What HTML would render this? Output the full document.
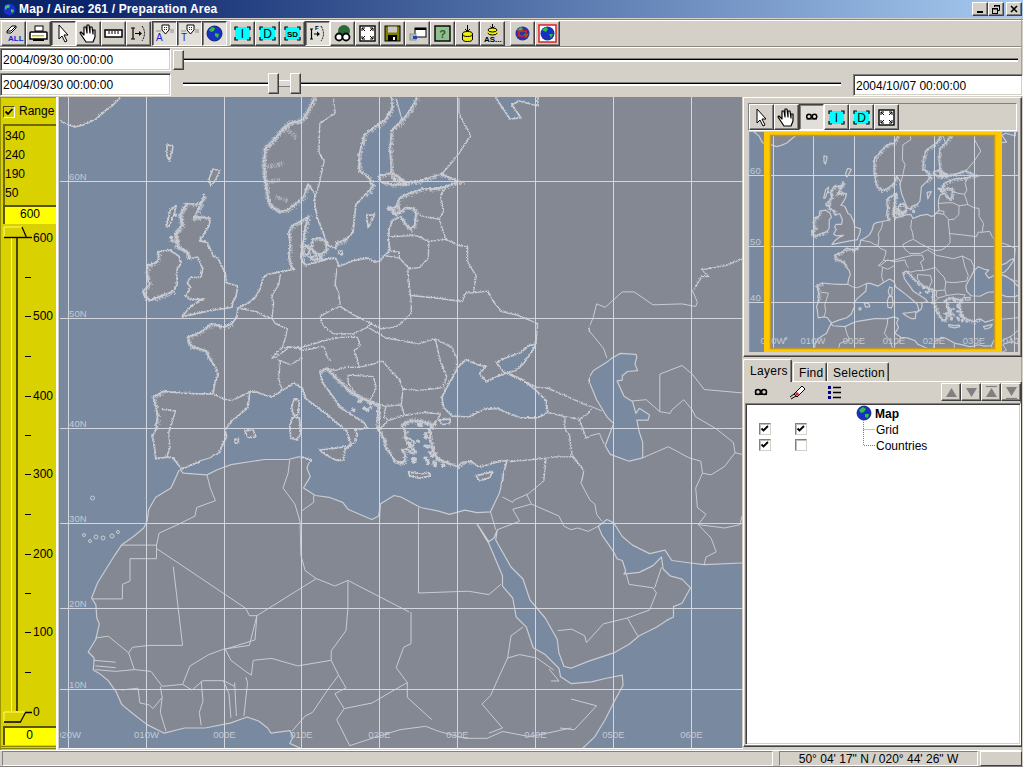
<!DOCTYPE html>
<html><head><meta charset="utf-8">
<style>
*{box-sizing:border-box;margin:0;padding:0}
html,body{width:1023px;height:767px;overflow:hidden;background:#d4d0c8;font-family:"Liberation Sans",sans-serif;font-size:12px;color:#000;position:relative}
.a{position:absolute;display:block}
.t{white-space:pre;line-height:14px}
.wb{position:absolute;top:2px;width:16px;height:14px;background:#d4d0c8;border-top:1px solid #fff;border-left:1px solid #fff;border-right:1px solid #404040;border-bottom:1px solid #404040;box-shadow:inset -1px -1px 0 #808080}
.btn{position:absolute;top:21px;width:25px;height:25px;background:#d4d0c8;border-top:1px solid #fff;border-left:1px solid #fff;border-right:1px solid #404040;border-bottom:1px solid #404040;box-shadow:inset -1px -1px 0 #808080}
.btn.p{border-top:1px solid #404040;border-left:1px solid #404040;border-right:1px solid #fff;border-bottom:1px solid #fff;box-shadow:inset 1px 1px 0 #808080;background:#e2dfd9}
.btn svg,.sb svg{position:absolute;left:0;top:0}
.sb{position:absolute;width:25px;height:26px;background:#d4d0c8;border-top:1px solid #fff;border-left:1px solid #fff;border-right:1px solid #404040;border-bottom:1px solid #404040;box-shadow:inset -1px -1px 0 #808080}
.sb.p{border-top:1px solid #404040;border-left:1px solid #404040;border-right:1px solid #fff;border-bottom:1px solid #fff;box-shadow:inset 1px 1px 0 #808080;background:#e2dfd9}
.tf{position:absolute;background:#fff;border-top:1px solid #808080;border-left:1px solid #808080;border-right:1px solid #fff;border-bottom:1px solid #fff;box-shadow:inset 1px 1px 0 #404040,inset -1px -1px 0 #d4d0c8}
.tf span{position:absolute;left:2px;white-space:pre;line-height:14px}
.thumb{position:absolute;background:#d4d0c8;border-top:1px solid #fff;border-left:1px solid #fff;border-right:1px solid #404040;border-bottom:1px solid #404040;box-shadow:inset -1px -1px 0 #808080}
.trk{position:absolute;height:4px;background:#fff;border-top:1px solid #808080;box-shadow:inset 0 1px 0 #000}
.ab{position:absolute;top:383px;width:20px;height:18px;background:#d4d0c8;border-top:1px solid #fff;border-left:1px solid #fff;border-right:1px solid #404040;border-bottom:1px solid #404040;box-shadow:inset -1px -1px 0 #808080}
.ab svg{position:absolute;left:0;top:0}
.yl{position:absolute;left:25px;white-space:pre;line-height:14px;font-size:12px}
</style></head><body>
<!-- title bar -->
<div class="a" style="left:0;top:0;width:1023px;height:18px;background:linear-gradient(to right,#0a246a 0%,#0a246a 8%,#a6caf0 100%)"></div>
<svg class="a" style="left:2px;top:1px" width="15" height="16" viewBox="0 0 15 16">
<circle cx="7.5" cy="8.5" r="6" fill="#1a2ec8"/><path d="M3,5 L6,3.5 L8,4.5 L7,7 L5,7 L4,9 L3,8Z M9,8 L12,9 L11,12 L9,11Z" fill="#2fd04a"/>
</svg>
<div class="a t" style="left:19px;top:2px;color:#fff;font-weight:bold;font-size:12px;letter-spacing:0.15px">Map / Airac 261 / Preparation Area</div>
<div class="wb" style="left:972px"><div class="a" style="left:4px;top:8px;width:6px;height:2px;background:#000"></div></div>
<div class="wb" style="left:988px"><svg class="a" style="left:2px;top:1px" width="10" height="10"><path d="M3.5,1.5h5v5h-1.5 M3.5,1.5v1.5" fill="none" stroke="#000" stroke-width="1"/><rect x="3" y="1" width="6" height="1.5" fill="#000"/><rect x="1.5" y="4.5" width="5" height="5" fill="none" stroke="#000"/><rect x="1" y="4" width="6" height="1.5" fill="#000"/></svg></div>
<div class="wb" style="left:1006px"><svg class="a" style="left:2px;top:1px" width="10" height="10"><path d="M2,2 L8,8 M8,2 L2,8" stroke="#000" stroke-width="1.6"/></svg></div>
<div class="a" style="left:0;top:18px;width:1023px;height:1px;background:#d4d0c8"></div>
<div class="a" style="left:0;top:19px;width:1023px;height:1px;background:#8a8680"></div>
<div class="a" style="left:0;top:20px;width:1023px;height:1px;background:#fff"></div>
<div class="a" style="left:1021px;top:18px;width:1px;height:749px;background:#a8a49c"></div>
<div class="btn" style="left:1px"><svg width="23" height="23" viewBox="0 0 23 23"><path d="M5,9 L10,4 L14,4 L14,6 L9,11 L5,11Z" fill="#fff" stroke="#000" stroke-width="1"/><path d="M5,9 L9,9 L14,4" fill="none" stroke="#000"/><text x="6" y="19" font-family="Liberation Sans" font-size="8" font-weight="bold" fill="#2020d0">ALL</text></svg></div>
<div class="btn" style="left:26px"><svg width="23" height="23" viewBox="0 0 23 23"><rect x="8" y="4" width="8" height="5" fill="#fff" stroke="#000"/><path d="M4,10 h15 a1,1 0 0 1 1,1 v6 h-17 v-6 a1,1 0 0 1 1,-1z" fill="#fff" stroke="#000" stroke-width="1.5"/><rect x="5" y="13" width="12" height="1.5" fill="#c0c000"/><rect x="6" y="17" width="11" height="2" fill="#000"/></svg></div>
<div class="btn p" style="left:51px"><svg width="23" height="23" viewBox="0 0 23 23"><path d="M7,3 L7,17 L10,14 L13,20 L15,19 L12,13 L16,13Z" fill="#fff" stroke="#000" stroke-width="1"/></svg></div>
<div class="btn" style="left:76px"><svg width="23" height="23" viewBox="0 0 23 23"><path d="M6,12 L4,10 L3,11 L7,17 L9,20 L16,20 L18,15 L18,8 L16,8 L16,12 L15,5 L13,5 L13,11 L12,3 L10,3 L10,11 L9,5 L7,5 L7,13Z" fill="#fff" stroke="#000" stroke-width="1.2" stroke-linejoin="round"/></svg></div>
<div class="btn" style="left:101px"><svg width="23" height="23" viewBox="0 0 23 23"><rect x="3" y="8" width="17" height="7" fill="#fff" stroke="#000" stroke-width="1.5"/><path d="M7,9v3 M10,9v3 M13,9v3 M16,9v3" stroke="#000"/></svg></div>
<div class="btn" style="left:126px"><svg width="23" height="23" viewBox="0 0 23 23"><path d="M4,6 h4 M6,6 v11 M4,17 h4 M8,11.5 h5" stroke="#000" stroke-width="1.2" fill="none"/><path d="M12,9 L15,11.5 L12,14Z" fill="#000"/><path d="M15,4 Q20,11 15,19" fill="none" stroke="#000" stroke-dasharray="2,1"/></svg></div>
<div class="btn p" style="left:152px"><svg width="23" height="23" viewBox="0 0 23 23"><path d="M9,3 h7 v5 l-3.5,4 l-3.5,-4z" fill="#fff" stroke="#000"/><circle cx="11.5" cy="5.5" r=".6"/><circle cx="13.5" cy="5.5" r=".6"/><circle cx="11.5" cy="7.5" r=".6"/><circle cx="13.5" cy="7.5" r=".6"/><path d="M3,9 h5 M17,8 h4 M17,10 h4" stroke="#909090" stroke-width="1.2"/><text x="3" y="19" font-family="Liberation Sans" font-size="10" fill="#2020d0">A</text></svg></div>
<div class="btn p" style="left:177px"><svg width="23" height="23" viewBox="0 0 23 23"><path d="M9,3 h7 v5 l-3.5,4 l-3.5,-4z" fill="#fff" stroke="#000"/><circle cx="11.5" cy="5.5" r=".6"/><circle cx="13.5" cy="5.5" r=".6"/><circle cx="11.5" cy="7.5" r=".6"/><circle cx="13.5" cy="7.5" r=".6"/><path d="M3,9 h5 M17,8 h4 M17,10 h4" stroke="#909090" stroke-width="1.2"/><text x="3" y="19" font-family="Liberation Sans" font-size="10" fill="#2020d0">T</text></svg></div>
<div class="btn p" style="left:202px"><svg width="23" height="23" viewBox="0 0 23 23"><circle cx="11.5" cy="11.5" r="7.5" fill="#1830c0" stroke="#102080"/><path d="M6,8 L9,5 L12,6 L11,9 L8,10Z M12,11 L16,12 L15,16 L12,14Z" fill="#30c040"/></svg></div>
<div class="btn" style="left:230px"><svg width="23" height="23" viewBox="0 0 23 23"><rect x="4" y="5" width="15" height="13" fill="#00ffff"/><path d="M4,8 V5 H7 M16,5 H19 V8 M19,15 V18 H16 M7,18 H4 V15" fill="none" stroke="#000" stroke-width="1.2"/><text x="11.5" y="16" text-anchor="middle" font-family="Liberation Sans" font-size="12" font-weight="normal" fill="#000">I</text></svg></div>
<div class="btn" style="left:255px"><svg width="23" height="23" viewBox="0 0 23 23"><rect x="4" y="5" width="15" height="13" fill="#00ffff"/><path d="M4,8 V5 H7 M16,5 H19 V8 M19,15 V18 H16 M7,18 H4 V15" fill="none" stroke="#000" stroke-width="1.2"/><text x="11.5" y="16" text-anchor="middle" font-family="Liberation Sans" font-size="12" font-weight="normal" fill="#000">D</text></svg></div>
<div class="btn" style="left:280px"><svg width="23" height="23" viewBox="0 0 23 23"><rect x="4" y="5" width="15" height="13" fill="#00ffff"/><path d="M4,8 V5 H7 M16,5 H19 V8 M19,15 V18 H16 M7,18 H4 V15" fill="none" stroke="#000" stroke-width="1.2"/><text x="11.5" y="14.5" text-anchor="middle" font-family="Liberation Sans" font-size="8" font-weight="bold" fill="#000">SD</text></svg></div>
<div class="btn p" style="left:305px"><svg width="23" height="23" viewBox="0 0 23 23"><path d="M4,7 h3 M5.5,7 v10 M4,17 h3 M8,12 h4" stroke="#000" stroke-width="1.2" fill="none"/><path d="M11,9.5 L14,12 L11,14.5Z" fill="#000"/><text x="9" y="8" font-family="Liberation Sans" font-size="6" font-weight="bold">F</text><path d="M15,4 Q20,12 15,19" fill="none" stroke="#000" stroke-dasharray="2,1"/></svg></div>
<div class="btn" style="left:330px"><svg width="23" height="23" viewBox="0 0 23 23"><circle cx="13" cy="9" r="6" fill="#2a6a3a"/><circle cx="8" cy="15" r="3.5" fill="#fff" stroke="#000" stroke-width="1.8"/><circle cx="15" cy="15" r="3.5" fill="#fff" stroke="#000" stroke-width="1.8"/></svg></div>
<div class="btn" style="left:355px"><svg width="23" height="23" viewBox="0 0 23 23"><rect x="4" y="4" width="15" height="15" fill="#fff" stroke="#000" stroke-width="1.4"/><path d="M6,6 L9,9 M6,6 h3 M6,6 v3 M17,6 L14,9 M17,6 h-3 M17,6 v3 M6,17 L9,14 M6,17 h3 M6,17 v-3 M17,17 L14,14 M17,17 h-3 M17,17 v-3" stroke="#000" fill="none"/></svg></div>
<div class="btn" style="left:380px"><svg width="23" height="23" viewBox="0 0 23 23"><rect x="4" y="4" width="15" height="15" fill="#808000" stroke="#000"/><rect x="7" y="4.5" width="9" height="6" fill="#c8c8c8"/><rect x="7" y="13" width="9" height="6" fill="#000"/><rect x="12" y="15" width="2" height="3" fill="#fff"/></svg></div>
<div class="btn" style="left:405px"><svg width="23" height="23" viewBox="0 0 23 23"><rect x="9" y="6" width="11" height="9" fill="#fff" stroke="#000"/><rect x="9" y="6" width="11" height="2" fill="#000"/><rect x="4" y="12" width="6" height="6" fill="#b0c0b0" stroke="#909090"/><rect x="7" y="14" width="4" height="3" fill="#2040c0"/></svg></div>
<div class="btn" style="left:430px"><svg width="23" height="23" viewBox="0 0 23 23"><rect x="4" y="4" width="15" height="15" fill="#90c090" stroke="#000" stroke-width="1.4"/><text x="11.5" y="16" text-anchor="middle" font-family="Liberation Sans" font-size="11" font-weight="bold" fill="#2a5a2a">?</text></svg></div>
<div class="btn" style="left:455px"><svg width="23" height="23" viewBox="0 0 23 23"><path d="M11.5,3 v6 M9,7 l2.5,2.5 l2.5,-2.5" stroke="#000" fill="none"/><ellipse cx="11.5" cy="17" rx="5" ry="2.5" fill="#f0f000" stroke="#000"/><rect x="6.5" y="12" width="10" height="5" fill="#f0f000"/><path d="M6.5,12 v5 M16.5,12 v5" stroke="#000"/><ellipse cx="11.5" cy="12" rx="5" ry="2.5" fill="#f0f000" stroke="#000"/></svg></div>
<div class="btn" style="left:480px"><svg width="23" height="23" viewBox="0 0 23 23"><path d="M11.5,2 v4 M9.5,4.5 l2,2 l2,-2" stroke="#000" fill="none"/><ellipse cx="11.5" cy="11" rx="4.5" ry="2" fill="#f0f000" stroke="#000"/><rect x="7" y="8" width="9" height="3" fill="#f0f000"/><ellipse cx="11.5" cy="8" rx="4.5" ry="2" fill="#f0f000" stroke="#000"/><text x="3" y="20" font-family="Liberation Sans" font-size="8" font-weight="bold">AS...</text></svg></div>
<div class="btn" style="left:510px"><svg width="23" height="23" viewBox="0 0 23 23"><circle cx="11.5" cy="11.5" r="7" fill="#3030a0"/><path d="M6,8 L10,5 L12,7 L10,10Z M13,12 L17,12 L15,16Z" fill="#30c040"/><rect x="8" y="9" width="7" height="5" fill="none" stroke="#e02020" stroke-width="1.5"/></svg></div>
<div class="btn" style="left:535px"><svg width="23" height="23" viewBox="0 0 23 23"><rect x="3" y="3" width="17" height="17" fill="#fff" stroke="#e02020" stroke-width="1.5"/><circle cx="11.5" cy="11.5" r="7" fill="#1830c0"/><path d="M6,8 L10,5 L12,7 L10,10Z M13,12 L17,12 L15,16Z" fill="#30c040"/></svg></div>
<div class="a" style="left:0;top:46px;width:1021px;height:1px;background:#8a8680"></div>
<div class="a" style="left:0;top:47px;width:1021px;height:1px;background:#fff"></div>
<!-- date row 1 -->
<div class="tf" style="left:0;top:48px;width:171px;height:23px"><span style="top:4px">2004/09/30 00:00:00</span></div>
<div class="trk" style="left:178px;top:58px;width:840px"></div>
<div class="thumb" style="left:173px;top:50px;width:11px;height:20px"></div>
<!-- date row 2 -->
<div class="tf" style="left:0;top:73px;width:171px;height:23px"><span style="top:4px">2004/09/30 00:00:00</span></div>
<div class="trk" style="left:183px;top:82px;width:658px"></div>
<div class="a" style="left:278px;top:80px;width:12px;height:7px;background:#dcd9d2;border-top:1px solid #fff;border-bottom:1px solid #808080"></div>
<div class="thumb" style="left:268px;top:73px;width:11px;height:21px"></div>
<div class="thumb" style="left:290px;top:73px;width:11px;height:21px"></div>
<div class="tf" style="left:853px;top:74px;width:170px;height:22px"><span style="top:4px">2004/10/07 00:00:00</span></div>
<div class="a" style="left:0;top:97px;width:56px;height:654px;background:#d9d100"></div>
<div class="a" style="left:0;top:97px;width:1px;height:654px;background:#9a9400"></div>
<div class="a" style="left:0;top:97px;width:56px;height:1px;background:#9a9400"></div>
<div class="a" style="left:3px;top:106px;width:12px;height:12px;border:1px solid #5a5600;border-right-color:#fff;border-bottom-color:#fff;background:#d9d100"><svg class="a" style="left:0;top:0" width="10" height="10"><path d="M1.5,4.5 L4,7 L8.5,2" fill="none" stroke="#000" stroke-width="1.8"/></svg></div>
<div class="a t" style="left:19px;top:104px">Range</div>
<div class="a" style="left:3px;top:124px;width:54px;height:81px;border-top:2px solid #6e6a00;border-left:2px solid #6e6a00;background:#d9d100"></div>
<div class="a t" style="left:5px;top:129px">340</div>
<div class="a t" style="left:5px;top:148px">240</div>
<div class="a t" style="left:5px;top:167px">190</div>
<div class="a t" style="left:5px;top:186px">50</div>
<div class="a" style="left:3px;top:205px;width:54px;height:19px;background:#ffff00;border-top:2px solid #5a5600;border-left:2px solid #5a5600"></div>
<div class="a t" style="left:3px;top:207px;width:54px;text-align:center">600</div>
<div class="a" style="left:11px;top:238px;width:1px;height:473px;background:#ffff60"></div>
<div class="a" style="left:16px;top:238px;width:2px;height:473px;background:#4a4600"></div>
<div class="a" style="left:12px;top:238px;width:4px;height:473px;background:#d9d100"></div>
<svg class="a" style="left:3px;top:226px" width="30" height="14"><path d="M1,1 H19 L23,11 H1Z" fill="#d9d100"/><path d="M1,11 V1 H19" fill="none" stroke="#ffff70" stroke-width="1"/><path d="M19,1 L23.5,11.5" stroke="#000" stroke-width="1.2"/><path d="M1,11.5 H29" stroke="#000" stroke-width="1.4"/></svg>
<svg class="a" style="left:3px;top:710px" width="30" height="14"><path d="M1,2 H23 L18,12 H1Z" fill="#d9d100"/><path d="M1,12 V2 H22" fill="none" stroke="#ffff70" stroke-width="1"/><path d="M17.5,12 L22.5,2.5" stroke="#000" stroke-width="1.2"/><path d="M1,12 H18 M22,2.5 H29" stroke="#000" stroke-width="1.4"/></svg>
<div class="a t" style="left:33px;top:231px">600</div>
<div class="a" style="left:25px;top:277px;width:6px;height:1px;background:#000"></div>
<div class="a" style="left:25px;top:316px;width:6px;height:1px;background:#000"></div>
<div class="a t" style="left:33px;top:309px">500</div>
<div class="a" style="left:25px;top:356px;width:6px;height:1px;background:#000"></div>
<div class="a" style="left:25px;top:396px;width:6px;height:1px;background:#000"></div>
<div class="a t" style="left:33px;top:389px">400</div>
<div class="a" style="left:25px;top:435px;width:6px;height:1px;background:#000"></div>
<div class="a" style="left:25px;top:474px;width:6px;height:1px;background:#000"></div>
<div class="a t" style="left:33px;top:467px">300</div>
<div class="a" style="left:25px;top:514px;width:6px;height:1px;background:#000"></div>
<div class="a" style="left:25px;top:554px;width:6px;height:1px;background:#000"></div>
<div class="a t" style="left:33px;top:547px">200</div>
<div class="a" style="left:25px;top:593px;width:6px;height:1px;background:#000"></div>
<div class="a" style="left:25px;top:632px;width:6px;height:1px;background:#000"></div>
<div class="a t" style="left:33px;top:625px">100</div>
<div class="a" style="left:25px;top:672px;width:6px;height:1px;background:#000"></div>
<div class="a t" style="left:33px;top:705px">0</div>
<div class="a" style="left:3px;top:726px;width:53px;height:19px;background:#ffff00;border-top:2px solid #5a5600;border-left:2px solid #5a5600"></div>
<div class="a t" style="left:3px;top:728px;width:53px;text-align:center">0</div>
<div class="a" style="left:1px;top:746px;width:55px;height:1px;background:#8a8400"></div>
<div class="a" style="left:1px;top:748px;width:55px;height:1px;background:#8a8400"></div>
<!-- map frame -->
<div class="a" style="left:56px;top:97px;width:2px;height:653px;background:#fff"></div>
<div class="a" style="left:59px;top:97px;width:1px;height:651px;background:#808080"></div>
<svg class="a" style="left:60px;top:97px" width="682" height="651" viewBox="60 97 682 651">
<defs><filter id="jag" x="-5%" y="-5%" width="110%" height="110%"><feTurbulence type="turbulence" baseFrequency="0.25" numOctaves="1" seed="5"/><feDisplacementMap in="SourceGraphic" scale="3" xChannelSelector="R" yChannelSelector="G"/></filter><g id="geo">
<rect x="0" y="0" width="1100" height="900" fill="#838893"/>
<polygon points="20.0,60.0 313.7,60.0 313.7,97.0 308.6,107.2 301.7,119.2 288.0,122.6 279.5,131.2 271.0,141.4 264.2,147.4 263.3,158.5 263.3,174.0 265.9,189.3 267.6,201.2 270.0,205.0 278.2,210.5 286.4,209.2 297.4,201.0 302.8,195.5 307.0,183.0 313.8,192.7 313.8,203.7 316.5,217.4 322.0,231.1 324.7,239.3 327.5,244.7 334.3,247.5 335.7,242.0 346.6,237.9 352.1,231.1 353.5,217.4 354.9,203.7 364.4,194.1 368.5,190.0 371.9,184.2 366.8,175.6 358.2,168.8 358.2,153.4 363.3,134.6 373.6,126.0 383.8,119.2 391.4,107.2 390.6,97.0 390.6,60.0 416.2,60.0 416.2,97.0 410.3,107.2 401.7,119.2 390.6,129.5 389.0,148.3 390.6,170.5 392.4,179.0 401.0,182.0 417.0,180.7 440.1,173.0 446.0,175.6 458.0,181.0 447.8,184.2 445.0,185.6 433.6,187.9 421.9,187.9 407.8,192.6 398.4,197.3 394.9,205.5 396.1,212.5 400.8,210.2 404.3,206.7 413.7,207.8 414.9,212.5 413.7,224.2 409.0,227.8 404.3,223.1 399.6,216.0 391.4,219.5 387.9,230.1 387.9,240.6 389.1,250.0 383.2,254.7 379.5,259.8 374.0,261.2 365.8,257.1 352.1,259.8 338.4,265.3 334.3,257.1 324.7,258.4 316.5,261.2 305.6,263.9 302.0,262.0 300.0,255.0 301.5,245.0 303.0,236.0 304.0,228.0 307.0,216.0 300.1,220.1 290.5,225.6 287.8,231.1 289.2,244.7 287.8,255.7 290.5,266.6 293.2,268.0 286.4,269.7 277.8,271.4 267.6,273.1 262.5,276.5 259.0,288.5 253.9,297.0 247.1,302.2 236.8,307.3 236.0,315.8 231.0,322.7 222.3,326.1 210.3,322.7 200.1,331.2 186.4,336.4 189.8,344.9 205.2,350.0 208.6,358.0 215.4,367.3 217.2,374.1 213.8,382.6 212.1,392.9 196.7,392.9 179.6,392.0 162.5,390.3 152.3,396.3 154.8,404.8 156.5,415.1 154.8,428.8 151.4,435.6 153.1,442.4 154.8,457.8 165.9,456.1 172.7,457.8 177.9,464.6 181.3,468.0 193.2,462.9 210.3,457.8 218.9,451.0 222.3,442.4 225.7,435.6 224.0,428.8 231.0,420.2 247.1,406.5 248.8,391.2 255.6,391.2 271.0,396.3 281.3,389.5 293.2,382.6 301.7,387.7 305.2,398.0 312.0,403.1 325.7,413.4 335.9,421.9 346.2,430.5 349.6,442.4 346.2,447.5 354.7,440.7 356.4,433.9 354.7,428.8 366.7,427.0 363.2,421.9 353.0,415.1 339.3,406.5 332.5,396.3 322.3,382.6 318.8,370.7 325.7,367.3 335.9,377.5 349.6,391.2 365.0,399.0 377.0,404.0 376.3,427.1 380.4,433.4 384.6,441.7 383.6,445.9 387.7,450.0 394.0,460.5 399.2,462.6 403.4,460.5 404.4,454.2 401.3,449.0 405.5,448.0 410.7,452.1 414.8,451.1 407.5,443.8 403.4,436.5 404.4,430.2 401.3,424.0 409.6,419.8 415.9,419.8 422.1,420.9 431.5,424.0 434.7,421.9 428.4,428.2 428.4,435.5 430.5,443.8 432.6,452.1 437.8,458.4 448.2,462.6 456.4,465.7 461.8,461.5 470.0,460.5 478.6,466.3 495.7,461.2 505.9,459.5 502.5,473.2 500.8,488.0 499.1,493.8 490.5,511.8 476.9,512.6 464.9,510.1 449.5,514.3 437.6,510.9 420.5,507.5 401.0,497.0 394.0,495.5 380.3,504.1 378.7,516.0 371.8,519.5 347.9,509.2 342.8,502.4 329.1,497.3 315.4,495.5 303.5,488.0 310.3,476.6 306.9,468.0 310.3,459.5 301.7,456.1 288.1,459.5 264.2,459.5 231.0,464.6 217.2,469.7 206.9,474.9 183.0,473.2 179.6,468.9 171.0,488.0 155.7,497.3 148.8,509.2 147.1,521.2 143.7,528.0 133.5,536.5 121.5,545.1 114.7,555.3 106.1,569.0 97.6,582.7 91.6,598.0 95.9,604.9 96.8,618.0 99.3,623.8 95.9,639.2 88.2,652.0 94.2,658.0 93.3,670.0 99.3,673.4 107.8,680.2 116.4,692.2 121.5,704.1 131.7,712.7 147.1,724.6 164.2,733.2 184.7,728.0 205.2,728.0 231.0,722.9 247.1,717.0 259.0,721.2 267.6,728.0 271.0,733.2 289.8,730.6 293.2,736.6 289.8,743.4 300.0,748.0 300.0,790.0 20.0,790.0" fill="#7889a0" stroke="#c9ccd2" stroke-width="1.7" vector-effect="non-scaling-stroke" stroke-linejoin="round"/>
<polygon points="760.0,790.0 760.0,563.0 742.0,563.0 704.2,564.7 690.6,563.0 671.8,560.5 665.0,550.2 649.6,553.6 632.5,545.1 622.3,536.5 613.7,522.9 606.9,519.5 598.3,526.3 601.8,534.8 613.7,551.9 617.1,558.7 622.3,560.5 625.7,570.7 624.0,574.1 639.3,572.4 653.0,565.6 661.5,557.0 663.2,569.0 670.1,575.8 682.0,579.2 690.6,587.8 682.0,603.2 673.5,606.6 673.5,617.0 666.7,620.4 656.4,627.2 639.3,635.8 629.1,644.3 613.7,652.9 588.1,661.4 571.0,668.2 564.0,666.5 558.9,652.9 557.2,639.2 545.2,618.0 530.0,600.0 523.0,579.0 511.0,567.0 495.7,540.0 497.4,529.7 494.0,538.0 488.8,541.7 476.9,523.7 485.4,538.2 488.8,543.4 502.5,575.8 502.5,586.1 512.7,598.0 516.2,617.0 526.4,627.2 533.2,647.8 545.2,654.6 558.9,668.2 560.6,676.8 571.0,683.6 591.5,681.9 605.2,678.5 622.3,675.1 623.1,685.3 613.7,702.4 605.2,719.5 594.9,736.6 583.0,748.0 578.0,790.0" fill="#7889a0" stroke="#c9ccd2" stroke-width="1.7" vector-effect="non-scaling-stroke" stroke-linejoin="round"/>
<polygon points="612.0,358.0 606.9,362.1 593.2,370.7 588.1,379.2 593.2,391.2 596.6,399.7 606.9,416.8 613.7,423.6 610.3,432.2 605.2,445.8 610.3,454.4 629.1,461.2 642.7,457.8 642.7,442.4 639.3,432.2 636.8,420.2 647.9,420.2 649.6,415.1 639.3,408.3 635.9,413.4 632.5,401.4 624.0,396.3 617.1,380.9 622.3,380.1 622.3,375.8 627.4,371.5 637.6,370.7 635.0,363.8 636.8,357.0 635.9,354.3 620.5,353.4" fill="#7889a0" stroke="#c9ccd2" stroke-width="1.7" vector-effect="non-scaling-stroke" stroke-linejoin="round"/>
<polygon points="456.4,367.3 464.9,358.7 476.9,363.8 485.4,365.5 478.6,372.4 485.4,380.9 495.7,375.8 505.9,372.4 519.6,377.5 533.2,387.7 545.2,399.7 546.9,411.7 536.7,416.8 519.6,416.8 505.9,411.7 497.4,407.4 483.7,408.3 468.3,416.0 451.2,415.1 442.7,406.5 441.0,396.3 446.1,386.0 451.2,377.5" fill="#7889a0" stroke="#c9ccd2" stroke-width="1.7" vector-effect="non-scaling-stroke" stroke-linejoin="round"/>
<polygon points="502.5,358.0 519.6,351.7 528.1,344.9 535.0,343.2 531.6,350.0 523.0,362.0 516.0,369.0 505.9,372.4 502.5,370.7 495.7,362.0" fill="#7889a0" stroke="#c9ccd2" stroke-width="1.7" vector-effect="non-scaling-stroke" stroke-linejoin="round"/>
<polygon points="438.8,418.8 449.2,418.2 449.2,422.9 440.9,423.5" fill="#7889a0" stroke="#c9ccd2" stroke-width="1.7" vector-effect="non-scaling-stroke" stroke-linejoin="round"/>
<polygon points="495.0,80.0 495.0,97.0 509.0,118.0 520.0,117.0 511.0,104.0 518.0,100.0 537.0,105.0 537.0,80.0" fill="#7889a0" stroke="#c9ccd2" stroke-width="1.7" vector-effect="non-scaling-stroke" stroke-linejoin="round"/>
<polygon points="20.0,60.0 119.0,60.0 119.0,97.0 111.0,105.0 103.0,111.0 94.0,119.0 82.0,124.0 74.0,126.0 65.0,123.0 58.0,119.0 47.0,118.5 44.0,113.0 40.0,105.0 30.0,97.0 20.0,90.0" fill="#838893" stroke="#c9ccd2" stroke-width="1.7" vector-effect="non-scaling-stroke" stroke-linejoin="round"/>
<polygon points="166.0,144.0 172.0,145.0 171.0,152.0 169.0,160.0 166.0,155.0" fill="#838893" stroke="#c9ccd2" stroke-width="1.7" vector-effect="non-scaling-stroke" stroke-linejoin="round"/>
<polygon points="212.0,168.0 219.0,170.0 214.0,180.0 210.0,185.0 208.0,178.0" fill="#838893" stroke="#c9ccd2" stroke-width="1.7" vector-effect="non-scaling-stroke" stroke-linejoin="round"/>
<polygon points="186.0,202.5 194.7,203.5 200.6,201.5 203.5,193.7 199.6,204.4 192.8,217.1 198.7,216.2 209.4,217.1 208.4,224.0 202.6,234.7 198.7,239.6 206.5,241.6 212.3,255.0 217.2,257.8 224.0,271.4 225.7,281.7 236.8,285.1 235.1,295.4 231.7,302.2 231.0,306.4 213.7,309.0 196.7,312.4 181.3,315.8 186.4,309.0 195.0,302.2 203.5,298.0 189.8,298.8 184.7,295.4 189.8,286.8 186.4,281.7 189.8,276.5 200.1,276.5 201.8,268.0 196.7,256.0 188.1,257.8 186.4,250.9 181.1,248.4 176.2,245.8 177.1,240.6 174.2,233.8 181.1,224.0 179.1,214.2 183.0,207.4" fill="#838893" stroke="#c9ccd2" stroke-width="1.7" vector-effect="non-scaling-stroke" stroke-linejoin="round"/>
<polygon points="175.2,204.4 169.3,209.3 165.4,226.0 168.3,226.0 173.2,213.2" fill="#838893" stroke="#c9ccd2" stroke-width="1.7" vector-effect="non-scaling-stroke" stroke-linejoin="round"/>
<polygon points="157.4,250.9 169.3,249.2 177.9,255.2 180.4,262.9 176.2,268.0 176.2,283.4 172.8,290.2 159.1,295.4 148.8,299.6 143.7,295.4 142.0,290.2 148.8,283.4 147.1,278.2 145.4,271.4 147.1,264.6 155.7,261.2 157.4,257.8" fill="#838893" stroke="#c9ccd2" stroke-width="1.7" vector-effect="non-scaling-stroke" stroke-linejoin="round"/>
<polygon points="293.2,398.0 298.3,399.7 297.5,413.4 293.2,415.1 290.6,406.5" fill="#838893" stroke="#c9ccd2" stroke-width="1.7" vector-effect="non-scaling-stroke" stroke-linejoin="round"/>
<polygon points="291.5,416.8 298.3,416.8 300.0,432.2 296.6,439.0 289.8,437.3 288.9,425.3" fill="#838893" stroke="#c9ccd2" stroke-width="1.7" vector-effect="non-scaling-stroke" stroke-linejoin="round"/>
<polygon points="318.8,449.2 332.5,447.5 344.5,445.8 342.8,459.5 335.9,459.5 325.7,454.4" fill="#838893" stroke="#c9ccd2" stroke-width="1.7" vector-effect="non-scaling-stroke" stroke-linejoin="round"/>
<polygon points="407.5,470.9 419.0,473.0 428.4,472.0 429.4,475.1 419.0,477.2 408.6,475.1" fill="#838893" stroke="#c9ccd2" stroke-width="1.7" vector-effect="non-scaling-stroke" stroke-linejoin="round"/>
<polygon points="475.2,474.9 492.2,470.6 488.8,476.6 478.6,480.0" fill="#838893" stroke="#c9ccd2" stroke-width="1.7" vector-effect="non-scaling-stroke" stroke-linejoin="round"/>
<polygon points="244.0,430.0 252.0,429.0 255.0,436.0 247.0,437.0" fill="#838893" stroke="#c9ccd2" stroke-width="1.7" vector-effect="non-scaling-stroke" stroke-linejoin="round"/>
<polygon points="234.0,439.0 237.5,438.0 237.5,442.0 234.0,442.5" fill="#838893" stroke="#c9ccd2" stroke-width="1.7" vector-effect="non-scaling-stroke" stroke-linejoin="round"/>
<polygon points="365.8,214.6 374.0,213.3 367.2,227.0" fill="#838893" stroke="#c9ccd2" stroke-width="1.7" vector-effect="non-scaling-stroke" stroke-linejoin="round"/>
<polygon points="378.0,175.0 390.0,172.0 400.0,177.0 404.0,183.0 392.0,184.0 380.0,181.0" fill="#838893" stroke="#c9ccd2" stroke-width="1.7" vector-effect="non-scaling-stroke" stroke-linejoin="round"/>
<polygon points="312.0,238.5 319.0,237.0 325.0,241.0 325.5,250.0 320.0,253.0 313.0,252.0 310.0,246.0" fill="#838893" stroke="#c9ccd2" stroke-width="1.7" vector-effect="non-scaling-stroke" stroke-linejoin="round"/>
<polygon points="301.5,246.0 306.0,244.5 309.0,249.0 307.0,254.0 302.0,253.5" fill="#838893" stroke="#c9ccd2" stroke-width="1.7" vector-effect="non-scaling-stroke" stroke-linejoin="round"/>
<polygon points="309.0,256.0 318.0,254.5 321.0,257.5 311.0,259.0" fill="#838893" stroke="#c9ccd2" stroke-width="1.7" vector-effect="non-scaling-stroke" stroke-linejoin="round"/>
<polygon points="338.0,250.0 342.0,250.5 341.0,254.0 338.0,253.0" fill="#838893" stroke="#c9ccd2" stroke-width="1.7" vector-effect="non-scaling-stroke" stroke-linejoin="round"/>
<polygon points="391.0,207.0 398.0,205.5 399.0,212.0 392.0,213.0" fill="#838893" stroke="#c9ccd2" stroke-width="1.7" vector-effect="non-scaling-stroke" stroke-linejoin="round"/>
<polygon points="425.0,432.0 430.0,431.0 429.0,437.0 424.0,437.0" fill="#838893" stroke="#c9ccd2" stroke-width="1.7" vector-effect="non-scaling-stroke" stroke-linejoin="round"/>
<polygon points="406.0,436.0 414.0,442.0 412.0,445.0 405.0,440.0" fill="#838893" stroke="#c9ccd2" stroke-width="1.7" vector-effect="non-scaling-stroke" stroke-linejoin="round"/>
<polygon points="416.8,422.7 420.2,423.1 419.6,424.9 416.8,424.5" fill="#838893" stroke="#c9ccd2" stroke-width="1.7" vector-effect="non-scaling-stroke" stroke-linejoin="round"/>
<polygon points="418.1,422.8 420.0,423.2 419.7,425.1 418.1,424.7" fill="#838893" stroke="#c9ccd2" stroke-width="1.7" vector-effect="non-scaling-stroke" stroke-linejoin="round"/>
<polygon points="419.5,424.0 421.1,424.3 420.9,425.9 419.5,425.6" fill="#838893" stroke="#c9ccd2" stroke-width="1.7" vector-effect="non-scaling-stroke" stroke-linejoin="round"/>
<polygon points="423.3,444.4 426.2,444.6 425.7,445.9 423.3,445.7" fill="#838893" stroke="#c9ccd2" stroke-width="1.7" vector-effect="non-scaling-stroke" stroke-linejoin="round"/>
<polygon points="430.5,446.3 433.3,446.7 432.8,448.7 430.5,448.3" fill="#838893" stroke="#c9ccd2" stroke-width="1.7" vector-effect="non-scaling-stroke" stroke-linejoin="round"/>
<polygon points="424.0,432.4 426.5,432.7 426.1,434.0 424.0,433.8" fill="#838893" stroke="#c9ccd2" stroke-width="1.7" vector-effect="non-scaling-stroke" stroke-linejoin="round"/>
<polygon points="424.7,435.5 426.3,435.9 426.0,437.7 424.7,437.4" fill="#838893" stroke="#c9ccd2" stroke-width="1.7" vector-effect="non-scaling-stroke" stroke-linejoin="round"/>
<polygon points="426.3,444.4 428.8,444.8 428.4,446.9 426.3,446.5" fill="#838893" stroke="#c9ccd2" stroke-width="1.7" vector-effect="non-scaling-stroke" stroke-linejoin="round"/>
<polygon points="430.3,454.3 432.7,454.7 432.3,456.3 430.3,455.9" fill="#838893" stroke="#c9ccd2" stroke-width="1.7" vector-effect="non-scaling-stroke" stroke-linejoin="round"/>
<polygon points="435.4,456.7 438.6,457.1 438.0,459.2 435.4,458.8" fill="#838893" stroke="#c9ccd2" stroke-width="1.7" vector-effect="non-scaling-stroke" stroke-linejoin="round"/>
<polygon points="428.4,451.0 430.5,451.3 430.2,452.6 428.4,452.4" fill="#838893" stroke="#c9ccd2" stroke-width="1.7" vector-effect="non-scaling-stroke" stroke-linejoin="round"/>
<polygon points="432.8,452.2 436.0,452.5 435.5,454.2 432.8,453.9" fill="#838893" stroke="#c9ccd2" stroke-width="1.7" vector-effect="non-scaling-stroke" stroke-linejoin="round"/>
<polygon points="426.6,461.9 428.1,462.2 427.8,463.7 426.6,463.4" fill="#838893" stroke="#c9ccd2" stroke-width="1.7" vector-effect="non-scaling-stroke" stroke-linejoin="round"/>
<polygon points="424.8,458.7 428.3,459.1 427.7,460.8 424.8,460.5" fill="#838893" stroke="#c9ccd2" stroke-width="1.7" vector-effect="non-scaling-stroke" stroke-linejoin="round"/>
<polygon points="411.6,460.1 414.7,460.4 414.2,462.0 411.6,461.7" fill="#838893" stroke="#c9ccd2" stroke-width="1.7" vector-effect="non-scaling-stroke" stroke-linejoin="round"/>
<polygon points="411.7,457.3 415.1,457.8 414.5,460.0 411.7,459.5" fill="#838893" stroke="#c9ccd2" stroke-width="1.7" vector-effect="non-scaling-stroke" stroke-linejoin="round"/>
<polygon points="413.0,457.2 414.7,457.4 414.5,458.8 413.0,458.5" fill="#838893" stroke="#c9ccd2" stroke-width="1.7" vector-effect="non-scaling-stroke" stroke-linejoin="round"/>
<polygon points="423.4,456.3 426.1,456.7 425.6,458.5 423.4,458.1" fill="#838893" stroke="#c9ccd2" stroke-width="1.7" vector-effect="non-scaling-stroke" stroke-linejoin="round"/>
<polygon points="433.2,463.2 435.0,463.6 434.7,465.6 433.2,465.2" fill="#838893" stroke="#c9ccd2" stroke-width="1.7" vector-effect="non-scaling-stroke" stroke-linejoin="round"/>
<polygon points="432.3,461.6 434.2,461.9 433.9,463.5 432.3,463.2" fill="#838893" stroke="#c9ccd2" stroke-width="1.7" vector-effect="non-scaling-stroke" stroke-linejoin="round"/>
<polygon points="441.6,463.4 443.7,463.9 443.4,466.2 441.6,465.8" fill="#838893" stroke="#c9ccd2" stroke-width="1.7" vector-effect="non-scaling-stroke" stroke-linejoin="round"/>
<polygon points="432.7,461.1 435.9,461.5 435.4,463.6 432.7,463.2" fill="#838893" stroke="#c9ccd2" stroke-width="1.7" vector-effect="non-scaling-stroke" stroke-linejoin="round"/>
<polygon points="408.2,445.0 410.2,445.3 409.8,446.9 408.2,446.5" fill="#838893" stroke="#c9ccd2" stroke-width="1.7" vector-effect="non-scaling-stroke" stroke-linejoin="round"/>
<polygon points="416.2,439.8 418.3,440.1 418.0,441.4 416.2,441.2" fill="#838893" stroke="#c9ccd2" stroke-width="1.7" vector-effect="non-scaling-stroke" stroke-linejoin="round"/>
<polygon points="408.1,441.5 410.1,441.9 409.7,443.9 408.1,443.5" fill="#838893" stroke="#c9ccd2" stroke-width="1.7" vector-effect="non-scaling-stroke" stroke-linejoin="round"/>
<polygon points="357.7,399.0 361.1,399.4 360.6,401.3 357.7,400.9" fill="#838893" stroke="#c9ccd2" stroke-width="1.7" vector-effect="non-scaling-stroke" stroke-linejoin="round"/>
<polygon points="362.6,406.7 364.4,407.0 364.1,408.5 362.6,408.2" fill="#838893" stroke="#c9ccd2" stroke-width="1.7" vector-effect="non-scaling-stroke" stroke-linejoin="round"/>
<polygon points="369.2,405.8 371.2,406.1 370.8,407.6 369.2,407.3" fill="#838893" stroke="#c9ccd2" stroke-width="1.7" vector-effect="non-scaling-stroke" stroke-linejoin="round"/>
<polygon points="365.8,407.5 367.7,408.0 367.4,410.4 365.8,409.9" fill="#838893" stroke="#c9ccd2" stroke-width="1.7" vector-effect="non-scaling-stroke" stroke-linejoin="round"/>
<polygon points="368.5,402.0 370.8,402.3 370.4,403.7 368.5,403.4" fill="#838893" stroke="#c9ccd2" stroke-width="1.7" vector-effect="non-scaling-stroke" stroke-linejoin="round"/>
<polygon points="351.8,408.0 353.8,408.5 353.4,410.6 351.8,410.2" fill="#838893" stroke="#c9ccd2" stroke-width="1.7" vector-effect="non-scaling-stroke" stroke-linejoin="round"/>
<polygon points="170.3,239.0 172.9,239.4 172.5,241.0 170.3,240.7" fill="#838893" stroke="#c9ccd2" stroke-width="1.7" vector-effect="non-scaling-stroke" stroke-linejoin="round"/>
<polygon points="169.6,235.6 171.3,235.9 171.0,237.4 169.6,237.1" fill="#838893" stroke="#c9ccd2" stroke-width="1.7" vector-effect="non-scaling-stroke" stroke-linejoin="round"/>
<polygon points="174.5,240.0 177.2,240.3 176.7,241.9 174.5,241.6" fill="#838893" stroke="#c9ccd2" stroke-width="1.7" vector-effect="non-scaling-stroke" stroke-linejoin="round"/>
<polygon points="180.1,218.0 181.6,218.3 181.4,219.9 180.1,219.6" fill="#838893" stroke="#c9ccd2" stroke-width="1.7" vector-effect="non-scaling-stroke" stroke-linejoin="round"/>
<polygon points="173.3,213.0 175.2,213.4 174.9,215.1 173.3,214.7" fill="#838893" stroke="#c9ccd2" stroke-width="1.7" vector-effect="non-scaling-stroke" stroke-linejoin="round"/>
<polygon points="398.3,177.6 400.6,178.1 400.2,180.5 398.3,180.0" fill="#838893" stroke="#c9ccd2" stroke-width="1.7" vector-effect="non-scaling-stroke" stroke-linejoin="round"/>
<polygon points="403.3,182.1 406.2,182.5 405.7,184.4 403.3,184.0" fill="#838893" stroke="#c9ccd2" stroke-width="1.7" vector-effect="non-scaling-stroke" stroke-linejoin="round"/>
<polygon points="393.1,176.8 394.6,177.3 394.3,179.7 393.1,179.2" fill="#838893" stroke="#c9ccd2" stroke-width="1.7" vector-effect="non-scaling-stroke" stroke-linejoin="round"/>
<polygon points="394.2,212.3 395.8,212.7 395.5,214.7 394.2,214.3" fill="#838893" stroke="#c9ccd2" stroke-width="1.7" vector-effect="non-scaling-stroke" stroke-linejoin="round"/>
<polygon points="391.8,208.7 393.9,209.2 393.5,211.7 391.8,211.2" fill="#838893" stroke="#c9ccd2" stroke-width="1.7" vector-effect="non-scaling-stroke" stroke-linejoin="round"/>
<polygon points="387.3,206.2 390.2,206.7 389.7,209.1 387.3,208.6" fill="#838893" stroke="#c9ccd2" stroke-width="1.7" vector-effect="non-scaling-stroke" stroke-linejoin="round"/>
<circle cx="92.5" cy="498" r="2" fill="none" stroke="#c9ccd2" stroke-width="1" vector-effect="non-scaling-stroke"/>
<circle cx="84" cy="535" r="1.5" fill="none" stroke="#c9ccd2" stroke-width="1" vector-effect="non-scaling-stroke"/>
<circle cx="90" cy="541" r="1.5" fill="none" stroke="#c9ccd2" stroke-width="1" vector-effect="non-scaling-stroke"/>
<circle cx="96" cy="537" r="2" fill="none" stroke="#c9ccd2" stroke-width="1" vector-effect="non-scaling-stroke"/>
<circle cx="103" cy="538" r="2" fill="none" stroke="#c9ccd2" stroke-width="1" vector-effect="non-scaling-stroke"/>
<circle cx="112" cy="536" r="2" fill="none" stroke="#c9ccd2" stroke-width="1" vector-effect="non-scaling-stroke"/>
<circle cx="118" cy="532" r="1.5" fill="none" stroke="#c9ccd2" stroke-width="1" vector-effect="non-scaling-stroke"/>
<path d="M332.5,97.0 L334.3,112.4 L318.8,122.6 L318.0,151.7 L323.2,160.2 L320.6,172.2 L317.2,187.6 L312.9,199.5 M458.0,97.0 L458.0,112.4 L461.5,119.2 L470.0,134.6 L456.4,155.0 L441.0,173.0 M395.0,97.0 L401.0,119.0 M414.9,212.5 L424.2,216.0 L438.3,218.4 L443.0,210.2 L439.5,196.1 L445.0,185.6 M389.1,236.0 L404.3,234.8 L416.0,234.8 L427.8,240.6 L445.0,238.3 M438.3,218.4 L445.0,238.3 L456.4,244.1 L466.6,245.8 L466.6,261.2 L475.2,274.8 L472.6,291.9 M383.2,254.7 L398.4,257.0 L408.5,268.0 L418.8,266.3 L427.3,257.8 L427.8,240.6 M386.7,250.0 L398.4,251.2 L398.4,257.0 M406.8,268.0 L408.5,285.1 L410.3,302.2 L410.3,312.4 L400.0,322.7 M410.3,294.5 L434.2,297.0 L461.5,300.5 L464.9,291.9 L472.6,291.9 L487.1,290.2 L492.2,300.5 L500.8,310.7 L516.2,314.1 L536.7,322.7 L535.0,343.2 M335.9,268.0 L334.2,283.4 L337.6,291.9 L339.3,303.9 M318.8,315.8 L330.8,309.0 L339.3,305.6 L353.0,314.1 L370.1,322.7 L380.3,327.8 L394.0,326.1 L400.0,322.7 M318.8,315.8 L322.3,324.4 L332.5,333.0 L353.0,333.0 L366.7,326.1 L370.1,322.7 M324.0,339.7 L339.3,336.4 L356.4,336.4 L359.8,344.9 L353.0,350.0 L356.0,357.0 M366.7,326.1 L385.0,337.0 L400.0,339.7 L417.1,343.2 L434.2,338.0 L451.2,346.6 L456.4,358.0 L456.4,367.3 M434.2,338.0 L439.5,360.0 M279.5,273.1 L277.8,283.4 L271.0,295.4 L272.7,302.2 L271.0,317.5 M236.8,307.3 L255.6,310.7 L264.2,315.8 L271.0,317.5 L274.4,322.7 L286.4,327.8 L284.7,336.4 L281.3,346.6 L274.4,353.4 L271.0,357.0 M281.3,346.6 L300.0,346.6 L324.0,339.7 M271.0,357.0 L274.6,356.7 L289.4,345.6 L302.4,349.3 L322.9,345.6 L326.6,356.7 L330.3,360.4 M276.4,358.6 L289.8,363.8 L301.7,357.0 M281.3,389.5 L277.8,377.5 L279.5,360.4 M212.1,392.9 L222.3,398.0 L231.0,399.7 L248.8,391.2 M325.7,367.3 L334.7,369.4 L345.6,366.3 L358.2,366.3 L372.2,363.1 L381.6,360.0 M347.2,374.1 L372.2,375.6 L375.4,386.6 L369.1,400.7 L356.6,396.0 L347.2,381.9 L347.2,374.1 M381.6,360.0 L389.4,369.4 L398.8,378.8 L402.0,388.2 L400.4,403.8 M372.2,402.2 L384.7,405.4 L400.4,403.8 M384.7,405.4 L383.2,416.3 L387.9,419.4 L403.5,414.7 L400.4,403.8 M378.5,428.8 L387.9,419.4 M403.5,414.7 L423.9,411.6 L439.5,413.2 L436.4,419.4 L433.2,422.6 M402.0,388.2 L417.6,389.7 L442.6,386.6 M439.5,360.0 L445.7,375.6 L442.6,386.6 M356.0,357.0 L358.2,366.3 M160.8,408.3 L174.5,410.0 L171.0,422.0 L167.6,432.2 L169.3,445.8 L165.9,456.1 M509.3,374.1 L535.5,386.1 L547.3,387.3 L601.7,411.0 M578.1,419.3 L592.3,408.6 M546.9,411.7 L563.9,415.7 L578.1,418.1 L585.2,437.0 L599.4,433.4 L604.1,444.1 M563.9,415.7 L563.9,427.5 L568.6,434.6 L571.0,453.6 L578.1,463.0 M505.9,459.5 L509.5,460.7 L535.5,458.3 L556.8,455.9 L571.0,455.9 L578.1,463.0 L582.8,470.1 L580.4,482.0 L589.9,500.0 L594.9,504.1 L596.6,514.3 L601.8,521.2 M545.0,458.0 L542.6,482.0 L528.4,493.8 L514.2,500.0 L512.7,502.4 L502.5,497.0 M526.4,493.8 L531.5,504.1 L512.7,509.2 L519.6,521.2 L497.4,529.7 M531.5,504.1 L558.9,516.0 L564.0,526.3 L571.0,529.7 L577.8,528.0 L588.1,531.4 L598.3,526.3 M490.5,511.8 L495.7,529.7 M742.0,257.8 L724.7,264.6 L700.8,268.9 L707.7,275.7 L700.8,275.7 L692.3,290.2 L697.4,302.2 L695.7,306.5 L682.0,303.9 L653.0,304.8 L634.2,291.9 L622.3,291.9 L605.2,307.3 L596.6,303.9 L593.2,317.5 L588.1,329.5 L603.5,348.3 L606.9,358.0 M632.0,401.0 L646.2,399.7 L659.8,411.7 L670.1,413.4 L671.8,410.0 L683.7,399.7 L692.3,410.0 L695.7,416.8 L716.2,428.8 L733.3,442.4 L735.0,452.7 L742.0,454.4 M659.8,411.7 L659.8,374.1 L682.0,365.5 L692.3,374.1 L704.2,389.5 L742.0,392.9 M642.7,457.8 L668.4,446.7 L688.9,457.8 L700.8,461.2 L702.5,473.2 L711.1,474.9 L724.7,466.3 L735.0,452.7 M702.5,473.2 L695.7,488.0 L697.4,507.5 L706.0,514.3 L698.3,524.6 L711.1,538.2 L716.2,551.9 L706.0,557.0 L704.2,564.7 M698.3,524.6 L724.7,528.0 L740.1,524.6 L742.0,516.0 M625.7,572.0 L629.1,584.4 L653.0,587.8 L656.4,593.0 L649.6,610.0 L627.4,618.0 L637.6,635.8 M654.7,587.8 L661.5,567.3 M557.5,630.6 L571.9,629.2 L584.7,635.8 L586.4,642.6 L603.5,623.8 L627.4,618.0 M549.0,669.0 L559.0,681.0 L551.0,681.0 M571.0,699.0 L596.6,705.8 L574.4,729.7 L560.0,728.0 M418.5,507.5 L418.5,593.0 L468.3,591.2 L488.8,594.6 L500.8,584.4 M380.3,504.1 L379.5,521.2 M206.9,474.9 L210.3,488.0 L215.4,500.7 L196.7,507.5 L195.0,516.0 L177.9,524.6 L159.1,533.1 L156.5,545.1 M121.5,545.1 L156.5,545.1 L156.5,558.7 L130.0,558.7 L130.0,581.0 L122.4,584.4 L122.4,598.9 L91.6,598.9 M156.5,548.5 L184.7,567.3 L245.7,608.3 L249.4,615.7 L256.9,615.7 L316.3,578.6 M173.3,566.7 L182.6,645.4 L149.2,645.4 L132.4,647.3 L128.7,652.9 L134.3,669.6 M95.3,669.6 L115.7,671.4 L134.3,669.6 L151.0,671.4 L162.2,686.3 M121.3,690.0 L138.0,688.2 L139.9,703.0 L149.2,704.9 L152.9,708.6 L162.2,697.4 L160.3,686.3 M289.8,459.5 L288.1,473.2 L283.0,488.0 L294.9,504.1 L300.0,521.2 L300.9,555.3 L305.2,570.7 L316.3,578.6 L334.9,586.0 L347.9,580.4 L409.2,612.0 M313.7,495.5 L313.7,502.4 L301.7,510.9 M347.9,580.4 L347.9,608.3 L346.0,630.6 L331.2,650.9 L331.2,660.3 M95.3,638.0 L108.3,636.2 L128.7,652.9 M93.4,660.3 L115.7,662.2 M95.3,665.9 L115.7,667.7 M162.2,686.3 L182.6,684.4 L190.0,665.9 L208.6,654.7 L223.4,649.2 L249.4,645.4 L256.9,615.7 M182.6,684.4 L191.9,690.0 L203.0,680.7 L223.4,680.7 L234.6,686.3 M256.9,615.7 L255.0,639.9 L225.3,649.2 L230.9,660.3 L245.7,671.4 L251.3,675.2 L253.2,660.3 M201.2,680.7 L203.0,701.2 L199.3,712.3 L201.2,725.3 M162.2,697.4 L160.3,712.3 L165.9,730.9 M223.4,680.7 L229.0,693.7 L230.9,717.9 M234.6,682.6 L236.4,716.0 M245.7,677.0 L247.6,682.6 L243.9,716.0 M253.2,660.3 L271.7,658.4 L297.7,665.9 L320.0,662.2 L331.2,660.3 M331.2,660.3 L338.6,675.2 L327.5,690.0 L312.6,712.3 L305.2,716.0 L292.2,730.9 M338.6,675.2 L346.0,688.0 L334.9,693.7 L344.2,708.6 M344.2,708.6 L372.0,703.0 L394.3,690.0 L407.3,682.6 M344.2,708.6 L336.7,719.7 L349.7,745.7 L372.0,738.3 L400.0,729.7 M411.0,612.0 L411.0,643.6 L403.6,647.3 L396.2,667.7 L407.3,682.6 L407.3,697.4 L431.8,719.7 M400.0,729.7 L425.6,726.3 L439.3,731.5 L464.9,738.3 L487.1,738.3 L502.5,731.5 L529.8,736.6 L546.9,733.2 L571.0,728.0 M523.0,627.0 L511.0,635.8 L507.6,658.0 L497.4,680.2 L490.5,695.6 L482.0,704.1 L502.5,728.0 L488.8,733.2 M507.6,658.0 L519.6,654.6 L536.7,658.0 L553.7,670.0" fill="none" stroke="#c9ccd2" stroke-width="1.3" vector-effect="non-scaling-stroke" stroke-linejoin="round"/>
<path d="M313.7,97.0 L308.6,107.2 L301.7,119.2 L288.0,122.6 L279.5,131.2 L271.0,141.4 L264.2,147.4 L263.3,158.5 L263.3,174.0 L265.9,189.3 L267.6,201.2 L270.0,205.0 L278.2,210.5 L286.4,209.2 L297.4,201.0 L302.8,195.5 L307.0,183.0 M364.4,194.1 L368.5,190.0 L371.9,184.2 L366.8,175.6 L358.2,168.8 L358.2,153.4 L363.3,134.6 L373.6,126.0 L383.8,119.2 L391.4,107.2 L390.6,97.0 M416.2,97.0 L410.3,107.2 L401.7,119.2 L390.6,129.5 L389.0,148.3 L390.6,170.5 L392.4,179.0 L401.0,182.0 L417.0,180.7 L440.1,173.0 L446.0,175.6 L458.0,181.0 L447.8,184.2 L445.0,185.6 L433.6,187.9 L421.9,187.9 L407.8,192.6 L398.4,197.3 L394.9,205.5 L396.1,212.5 L400.8,210.2 L404.3,206.7 L413.7,207.8 L414.9,212.5 L413.7,224.2 L409.0,227.8 L404.3,223.1 L399.6,216.0 M305.6,263.9 L302.0,262.0 L300.0,255.0 L301.5,245.0 L303.0,236.0 L304.0,228.0 L307.0,216.0 L300.1,220.1 L290.5,225.6 L287.8,231.1 L289.2,244.7 L287.8,255.7 L290.5,266.6 L293.2,268.0 M231.0,322.7 L222.3,326.1 L210.3,322.7 L200.1,331.2 L186.4,336.4 L189.8,344.9 L205.2,350.0 L208.6,358.0 M162.5,390.3 L152.3,396.3 L154.8,404.8 L156.5,415.1 L154.8,428.8 M318.8,370.7 L325.7,367.3 L335.9,377.5 L349.6,391.2 L365.0,399.0 L377.0,404.0 L376.3,427.1 L380.4,433.4 L384.6,441.7 L383.6,445.9 L387.7,450.0 L394.0,460.5 L399.2,462.6 L403.4,460.5 L404.4,454.2 L401.3,449.0 L405.5,448.0 L410.7,452.1 L414.8,451.1 L407.5,443.8 L403.4,436.5 L404.4,430.2 L401.3,424.0 L409.6,419.8 L415.9,419.8 L422.1,420.9 L431.5,424.0 L434.7,421.9 L428.4,428.2 L428.4,435.5 L430.5,443.8 L432.6,452.1 L437.8,458.4 L448.2,462.6 L456.4,465.7 L461.8,461.5 L470.0,460.5 M188.1,257.8 L186.4,250.9 L181.1,248.4 L176.2,245.8 L177.1,240.6 L174.2,233.8 L181.1,224.0 L179.1,214.2 L183.0,207.4 L186.0,202.5 M186.0,202.5 L194.7,203.5 L200.6,201.5 L203.5,193.7 L199.6,204.4 L192.8,217.1 L198.7,216.2 L209.4,217.1 M172.8,290.2 L159.1,295.4 L148.8,299.6 L143.7,295.4 L142.0,290.2 L148.8,283.4 L147.1,278.2 L145.4,271.4 L147.1,264.6 L155.7,261.2 L157.4,257.8 L157.4,250.9 M312.0,238.5 L319.0,237.0 L325.0,241.0 L325.5,250.0 L320.0,253.0 L313.0,252.0 L310.0,246.0 L312.0,238.5 M378.0,175.0 L390.0,172.0 L400.0,177.0 L404.0,183.0 L392.0,184.0 L380.0,181.0 L378.0,175.0 M301.5,246.0 L306.0,244.5 L309.0,249.0 L307.0,254.0 L302.0,253.5 L301.5,246.0 M309.0,256.0 L318.0,254.5 L321.0,257.5 L311.0,259.0 L309.0,256.0 M334.3,247.5 L335.7,242.0 L346.6,237.9" fill="none" stroke="#c9ccd2" stroke-width="3.4" stroke-dasharray="1.6,1.1,1,0.8,2.2,1.3" stroke-opacity="0.8" filter="url(#jag)" vector-effect="non-scaling-stroke"/>
<path d="M313.7,97.0 L308.6,107.2 L301.7,119.2 L288.0,122.6 L279.5,131.2 L271.0,141.4 L264.2,147.4 L263.3,158.5 L263.3,174.0 L265.9,189.3 L267.6,201.2 L270.0,205.0 L278.2,210.5 M188.1,257.8 L186.4,250.9 L181.1,248.4 L176.2,245.8 L177.1,240.6 L174.2,233.8 L181.1,224.0 L179.1,214.2 L183.0,207.4 L186.0,202.5 M325.7,367.3 L335.9,377.5 L349.6,391.2 L365.0,399.0 L377.0,404.0 M401.3,424.0 L409.6,419.8 L415.9,419.8 L422.1,420.9 L431.5,424.0 L434.7,421.9 M267.0,166.0 L283.0,163.0 M268.0,181.0 L279.0,179.0 M285.0,128.0 L296.0,137.0 M275.0,196.0 L287.0,200.0" fill="none" stroke="#c9ccd2" stroke-width="4.5" stroke-dasharray="1,1.2,2,0.8,1.5,1.5" stroke-opacity="0.6" vector-effect="non-scaling-stroke"/>
</g><g id="geo2">
<rect x="0" y="0" width="1100" height="900" fill="#838893"/>
<polygon points="20.0,60.0 313.7,60.0 313.7,97.0 308.6,107.2 301.7,119.2 288.0,122.6 279.5,131.2 271.0,141.4 264.2,147.4 263.3,158.5 263.3,174.0 265.9,189.3 267.6,201.2 270.0,205.0 278.2,210.5 286.4,209.2 297.4,201.0 302.8,195.5 307.0,183.0 313.8,192.7 313.8,203.7 316.5,217.4 322.0,231.1 324.7,239.3 327.5,244.7 334.3,247.5 335.7,242.0 346.6,237.9 352.1,231.1 353.5,217.4 354.9,203.7 364.4,194.1 368.5,190.0 371.9,184.2 366.8,175.6 358.2,168.8 358.2,153.4 363.3,134.6 373.6,126.0 383.8,119.2 391.4,107.2 390.6,97.0 390.6,60.0 416.2,60.0 416.2,97.0 410.3,107.2 401.7,119.2 390.6,129.5 389.0,148.3 390.6,170.5 392.4,179.0 401.0,182.0 417.0,180.7 440.1,173.0 446.0,175.6 458.0,181.0 447.8,184.2 445.0,185.6 433.6,187.9 421.9,187.9 407.8,192.6 398.4,197.3 394.9,205.5 396.1,212.5 400.8,210.2 404.3,206.7 413.7,207.8 414.9,212.5 413.7,224.2 409.0,227.8 404.3,223.1 399.6,216.0 391.4,219.5 387.9,230.1 387.9,240.6 389.1,250.0 383.2,254.7 379.5,259.8 374.0,261.2 365.8,257.1 352.1,259.8 338.4,265.3 334.3,257.1 324.7,258.4 316.5,261.2 305.6,263.9 302.0,262.0 300.0,255.0 301.5,245.0 303.0,236.0 304.0,228.0 307.0,216.0 300.1,220.1 290.5,225.6 287.8,231.1 289.2,244.7 287.8,255.7 290.5,266.6 293.2,268.0 286.4,269.7 277.8,271.4 267.6,273.1 262.5,276.5 259.0,288.5 253.9,297.0 247.1,302.2 236.8,307.3 236.0,315.8 231.0,322.7 222.3,326.1 210.3,322.7 200.1,331.2 186.4,336.4 189.8,344.9 205.2,350.0 208.6,358.0 215.4,367.3 217.2,374.1 213.8,382.6 212.1,392.9 196.7,392.9 179.6,392.0 162.5,390.3 152.3,396.3 154.8,404.8 156.5,415.1 154.8,428.8 151.4,435.6 153.1,442.4 154.8,457.8 165.9,456.1 172.7,457.8 177.9,464.6 181.3,468.0 193.2,462.9 210.3,457.8 218.9,451.0 222.3,442.4 225.7,435.6 224.0,428.8 231.0,420.2 247.1,406.5 248.8,391.2 255.6,391.2 271.0,396.3 281.3,389.5 293.2,382.6 301.7,387.7 305.2,398.0 312.0,403.1 325.7,413.4 335.9,421.9 346.2,430.5 349.6,442.4 346.2,447.5 354.7,440.7 356.4,433.9 354.7,428.8 366.7,427.0 363.2,421.9 353.0,415.1 339.3,406.5 332.5,396.3 322.3,382.6 318.8,370.7 325.7,367.3 335.9,377.5 349.6,391.2 365.0,399.0 377.0,404.0 376.3,427.1 380.4,433.4 384.6,441.7 383.6,445.9 387.7,450.0 394.0,460.5 399.2,462.6 403.4,460.5 404.4,454.2 401.3,449.0 405.5,448.0 410.7,452.1 414.8,451.1 407.5,443.8 403.4,436.5 404.4,430.2 401.3,424.0 409.6,419.8 415.9,419.8 422.1,420.9 431.5,424.0 434.7,421.9 428.4,428.2 428.4,435.5 430.5,443.8 432.6,452.1 437.8,458.4 448.2,462.6 456.4,465.7 461.8,461.5 470.0,460.5 478.6,466.3 495.7,461.2 505.9,459.5 502.5,473.2 500.8,488.0 499.1,493.8 490.5,511.8 476.9,512.6 464.9,510.1 449.5,514.3 437.6,510.9 420.5,507.5 401.0,497.0 394.0,495.5 380.3,504.1 378.7,516.0 371.8,519.5 347.9,509.2 342.8,502.4 329.1,497.3 315.4,495.5 303.5,488.0 310.3,476.6 306.9,468.0 310.3,459.5 301.7,456.1 288.1,459.5 264.2,459.5 231.0,464.6 217.2,469.7 206.9,474.9 183.0,473.2 179.6,468.9 171.0,488.0 155.7,497.3 148.8,509.2 147.1,521.2 143.7,528.0 133.5,536.5 121.5,545.1 114.7,555.3 106.1,569.0 97.6,582.7 91.6,598.0 95.9,604.9 96.8,618.0 99.3,623.8 95.9,639.2 88.2,652.0 94.2,658.0 93.3,670.0 99.3,673.4 107.8,680.2 116.4,692.2 121.5,704.1 131.7,712.7 147.1,724.6 164.2,733.2 184.7,728.0 205.2,728.0 231.0,722.9 247.1,717.0 259.0,721.2 267.6,728.0 271.0,733.2 289.8,730.6 293.2,736.6 289.8,743.4 300.0,748.0 300.0,790.0 20.0,790.0" fill="#7889a0" stroke="#c9ccd2" stroke-width="1.2" vector-effect="non-scaling-stroke" stroke-linejoin="round"/>
<polygon points="760.0,790.0 760.0,563.0 742.0,563.0 704.2,564.7 690.6,563.0 671.8,560.5 665.0,550.2 649.6,553.6 632.5,545.1 622.3,536.5 613.7,522.9 606.9,519.5 598.3,526.3 601.8,534.8 613.7,551.9 617.1,558.7 622.3,560.5 625.7,570.7 624.0,574.1 639.3,572.4 653.0,565.6 661.5,557.0 663.2,569.0 670.1,575.8 682.0,579.2 690.6,587.8 682.0,603.2 673.5,606.6 673.5,617.0 666.7,620.4 656.4,627.2 639.3,635.8 629.1,644.3 613.7,652.9 588.1,661.4 571.0,668.2 564.0,666.5 558.9,652.9 557.2,639.2 545.2,618.0 530.0,600.0 523.0,579.0 511.0,567.0 495.7,540.0 497.4,529.7 494.0,538.0 488.8,541.7 476.9,523.7 485.4,538.2 488.8,543.4 502.5,575.8 502.5,586.1 512.7,598.0 516.2,617.0 526.4,627.2 533.2,647.8 545.2,654.6 558.9,668.2 560.6,676.8 571.0,683.6 591.5,681.9 605.2,678.5 622.3,675.1 623.1,685.3 613.7,702.4 605.2,719.5 594.9,736.6 583.0,748.0 578.0,790.0" fill="#7889a0" stroke="#c9ccd2" stroke-width="1.2" vector-effect="non-scaling-stroke" stroke-linejoin="round"/>
<polygon points="612.0,358.0 606.9,362.1 593.2,370.7 588.1,379.2 593.2,391.2 596.6,399.7 606.9,416.8 613.7,423.6 610.3,432.2 605.2,445.8 610.3,454.4 629.1,461.2 642.7,457.8 642.7,442.4 639.3,432.2 636.8,420.2 647.9,420.2 649.6,415.1 639.3,408.3 635.9,413.4 632.5,401.4 624.0,396.3 617.1,380.9 622.3,380.1 622.3,375.8 627.4,371.5 637.6,370.7 635.0,363.8 636.8,357.0 635.9,354.3 620.5,353.4" fill="#7889a0" stroke="#c9ccd2" stroke-width="1.2" vector-effect="non-scaling-stroke" stroke-linejoin="round"/>
<polygon points="456.4,367.3 464.9,358.7 476.9,363.8 485.4,365.5 478.6,372.4 485.4,380.9 495.7,375.8 505.9,372.4 519.6,377.5 533.2,387.7 545.2,399.7 546.9,411.7 536.7,416.8 519.6,416.8 505.9,411.7 497.4,407.4 483.7,408.3 468.3,416.0 451.2,415.1 442.7,406.5 441.0,396.3 446.1,386.0 451.2,377.5" fill="#7889a0" stroke="#c9ccd2" stroke-width="1.2" vector-effect="non-scaling-stroke" stroke-linejoin="round"/>
<polygon points="502.5,358.0 519.6,351.7 528.1,344.9 535.0,343.2 531.6,350.0 523.0,362.0 516.0,369.0 505.9,372.4 502.5,370.7 495.7,362.0" fill="#7889a0" stroke="#c9ccd2" stroke-width="1.2" vector-effect="non-scaling-stroke" stroke-linejoin="round"/>
<polygon points="438.8,418.8 449.2,418.2 449.2,422.9 440.9,423.5" fill="#7889a0" stroke="#c9ccd2" stroke-width="1.2" vector-effect="non-scaling-stroke" stroke-linejoin="round"/>
<polygon points="495.0,80.0 495.0,97.0 509.0,118.0 520.0,117.0 511.0,104.0 518.0,100.0 537.0,105.0 537.0,80.0" fill="#7889a0" stroke="#c9ccd2" stroke-width="1.2" vector-effect="non-scaling-stroke" stroke-linejoin="round"/>
<polygon points="20.0,60.0 119.0,60.0 119.0,97.0 111.0,105.0 103.0,111.0 94.0,119.0 82.0,124.0 74.0,126.0 65.0,123.0 58.0,119.0 47.0,118.5 44.0,113.0 40.0,105.0 30.0,97.0 20.0,90.0" fill="#838893" stroke="#c9ccd2" stroke-width="1.2" vector-effect="non-scaling-stroke" stroke-linejoin="round"/>
<polygon points="166.0,144.0 172.0,145.0 171.0,152.0 169.0,160.0 166.0,155.0" fill="#838893" stroke="#c9ccd2" stroke-width="1.2" vector-effect="non-scaling-stroke" stroke-linejoin="round"/>
<polygon points="212.0,168.0 219.0,170.0 214.0,180.0 210.0,185.0 208.0,178.0" fill="#838893" stroke="#c9ccd2" stroke-width="1.2" vector-effect="non-scaling-stroke" stroke-linejoin="round"/>
<polygon points="186.0,202.5 194.7,203.5 200.6,201.5 203.5,193.7 199.6,204.4 192.8,217.1 198.7,216.2 209.4,217.1 208.4,224.0 202.6,234.7 198.7,239.6 206.5,241.6 212.3,255.0 217.2,257.8 224.0,271.4 225.7,281.7 236.8,285.1 235.1,295.4 231.7,302.2 231.0,306.4 213.7,309.0 196.7,312.4 181.3,315.8 186.4,309.0 195.0,302.2 203.5,298.0 189.8,298.8 184.7,295.4 189.8,286.8 186.4,281.7 189.8,276.5 200.1,276.5 201.8,268.0 196.7,256.0 188.1,257.8 186.4,250.9 181.1,248.4 176.2,245.8 177.1,240.6 174.2,233.8 181.1,224.0 179.1,214.2 183.0,207.4" fill="#838893" stroke="#c9ccd2" stroke-width="1.2" vector-effect="non-scaling-stroke" stroke-linejoin="round"/>
<polygon points="175.2,204.4 169.3,209.3 165.4,226.0 168.3,226.0 173.2,213.2" fill="#838893" stroke="#c9ccd2" stroke-width="1.2" vector-effect="non-scaling-stroke" stroke-linejoin="round"/>
<polygon points="157.4,250.9 169.3,249.2 177.9,255.2 180.4,262.9 176.2,268.0 176.2,283.4 172.8,290.2 159.1,295.4 148.8,299.6 143.7,295.4 142.0,290.2 148.8,283.4 147.1,278.2 145.4,271.4 147.1,264.6 155.7,261.2 157.4,257.8" fill="#838893" stroke="#c9ccd2" stroke-width="1.2" vector-effect="non-scaling-stroke" stroke-linejoin="round"/>
<polygon points="293.2,398.0 298.3,399.7 297.5,413.4 293.2,415.1 290.6,406.5" fill="#838893" stroke="#c9ccd2" stroke-width="1.2" vector-effect="non-scaling-stroke" stroke-linejoin="round"/>
<polygon points="291.5,416.8 298.3,416.8 300.0,432.2 296.6,439.0 289.8,437.3 288.9,425.3" fill="#838893" stroke="#c9ccd2" stroke-width="1.2" vector-effect="non-scaling-stroke" stroke-linejoin="round"/>
<polygon points="318.8,449.2 332.5,447.5 344.5,445.8 342.8,459.5 335.9,459.5 325.7,454.4" fill="#838893" stroke="#c9ccd2" stroke-width="1.2" vector-effect="non-scaling-stroke" stroke-linejoin="round"/>
<polygon points="407.5,470.9 419.0,473.0 428.4,472.0 429.4,475.1 419.0,477.2 408.6,475.1" fill="#838893" stroke="#c9ccd2" stroke-width="1.2" vector-effect="non-scaling-stroke" stroke-linejoin="round"/>
<polygon points="475.2,474.9 492.2,470.6 488.8,476.6 478.6,480.0" fill="#838893" stroke="#c9ccd2" stroke-width="1.2" vector-effect="non-scaling-stroke" stroke-linejoin="round"/>
<polygon points="244.0,430.0 252.0,429.0 255.0,436.0 247.0,437.0" fill="#838893" stroke="#c9ccd2" stroke-width="1.2" vector-effect="non-scaling-stroke" stroke-linejoin="round"/>
<polygon points="234.0,439.0 237.5,438.0 237.5,442.0 234.0,442.5" fill="#838893" stroke="#c9ccd2" stroke-width="1.2" vector-effect="non-scaling-stroke" stroke-linejoin="round"/>
<polygon points="365.8,214.6 374.0,213.3 367.2,227.0" fill="#838893" stroke="#c9ccd2" stroke-width="1.2" vector-effect="non-scaling-stroke" stroke-linejoin="round"/>
<polygon points="378.0,175.0 390.0,172.0 400.0,177.0 404.0,183.0 392.0,184.0 380.0,181.0" fill="#838893" stroke="#c9ccd2" stroke-width="1.2" vector-effect="non-scaling-stroke" stroke-linejoin="round"/>
<polygon points="312.0,238.5 319.0,237.0 325.0,241.0 325.5,250.0 320.0,253.0 313.0,252.0 310.0,246.0" fill="#838893" stroke="#c9ccd2" stroke-width="1.2" vector-effect="non-scaling-stroke" stroke-linejoin="round"/>
<polygon points="301.5,246.0 306.0,244.5 309.0,249.0 307.0,254.0 302.0,253.5" fill="#838893" stroke="#c9ccd2" stroke-width="1.2" vector-effect="non-scaling-stroke" stroke-linejoin="round"/>
<polygon points="309.0,256.0 318.0,254.5 321.0,257.5 311.0,259.0" fill="#838893" stroke="#c9ccd2" stroke-width="1.2" vector-effect="non-scaling-stroke" stroke-linejoin="round"/>
<polygon points="338.0,250.0 342.0,250.5 341.0,254.0 338.0,253.0" fill="#838893" stroke="#c9ccd2" stroke-width="1.2" vector-effect="non-scaling-stroke" stroke-linejoin="round"/>
<polygon points="391.0,207.0 398.0,205.5 399.0,212.0 392.0,213.0" fill="#838893" stroke="#c9ccd2" stroke-width="1.2" vector-effect="non-scaling-stroke" stroke-linejoin="round"/>
<polygon points="425.0,432.0 430.0,431.0 429.0,437.0 424.0,437.0" fill="#838893" stroke="#c9ccd2" stroke-width="1.2" vector-effect="non-scaling-stroke" stroke-linejoin="round"/>
<polygon points="406.0,436.0 414.0,442.0 412.0,445.0 405.0,440.0" fill="#838893" stroke="#c9ccd2" stroke-width="1.2" vector-effect="non-scaling-stroke" stroke-linejoin="round"/>
<polygon points="416.8,422.7 420.2,423.1 419.6,424.9 416.8,424.5" fill="#838893" stroke="#c9ccd2" stroke-width="1.2" vector-effect="non-scaling-stroke" stroke-linejoin="round"/>
<polygon points="418.1,422.8 420.0,423.2 419.7,425.1 418.1,424.7" fill="#838893" stroke="#c9ccd2" stroke-width="1.2" vector-effect="non-scaling-stroke" stroke-linejoin="round"/>
<polygon points="419.5,424.0 421.1,424.3 420.9,425.9 419.5,425.6" fill="#838893" stroke="#c9ccd2" stroke-width="1.2" vector-effect="non-scaling-stroke" stroke-linejoin="round"/>
<polygon points="423.3,444.4 426.2,444.6 425.7,445.9 423.3,445.7" fill="#838893" stroke="#c9ccd2" stroke-width="1.2" vector-effect="non-scaling-stroke" stroke-linejoin="round"/>
<polygon points="430.5,446.3 433.3,446.7 432.8,448.7 430.5,448.3" fill="#838893" stroke="#c9ccd2" stroke-width="1.2" vector-effect="non-scaling-stroke" stroke-linejoin="round"/>
<polygon points="424.0,432.4 426.5,432.7 426.1,434.0 424.0,433.8" fill="#838893" stroke="#c9ccd2" stroke-width="1.2" vector-effect="non-scaling-stroke" stroke-linejoin="round"/>
<polygon points="424.7,435.5 426.3,435.9 426.0,437.7 424.7,437.4" fill="#838893" stroke="#c9ccd2" stroke-width="1.2" vector-effect="non-scaling-stroke" stroke-linejoin="round"/>
<polygon points="426.3,444.4 428.8,444.8 428.4,446.9 426.3,446.5" fill="#838893" stroke="#c9ccd2" stroke-width="1.2" vector-effect="non-scaling-stroke" stroke-linejoin="round"/>
<polygon points="430.3,454.3 432.7,454.7 432.3,456.3 430.3,455.9" fill="#838893" stroke="#c9ccd2" stroke-width="1.2" vector-effect="non-scaling-stroke" stroke-linejoin="round"/>
<polygon points="435.4,456.7 438.6,457.1 438.0,459.2 435.4,458.8" fill="#838893" stroke="#c9ccd2" stroke-width="1.2" vector-effect="non-scaling-stroke" stroke-linejoin="round"/>
<polygon points="428.4,451.0 430.5,451.3 430.2,452.6 428.4,452.4" fill="#838893" stroke="#c9ccd2" stroke-width="1.2" vector-effect="non-scaling-stroke" stroke-linejoin="round"/>
<polygon points="432.8,452.2 436.0,452.5 435.5,454.2 432.8,453.9" fill="#838893" stroke="#c9ccd2" stroke-width="1.2" vector-effect="non-scaling-stroke" stroke-linejoin="round"/>
<polygon points="426.6,461.9 428.1,462.2 427.8,463.7 426.6,463.4" fill="#838893" stroke="#c9ccd2" stroke-width="1.2" vector-effect="non-scaling-stroke" stroke-linejoin="round"/>
<polygon points="424.8,458.7 428.3,459.1 427.7,460.8 424.8,460.5" fill="#838893" stroke="#c9ccd2" stroke-width="1.2" vector-effect="non-scaling-stroke" stroke-linejoin="round"/>
<polygon points="411.6,460.1 414.7,460.4 414.2,462.0 411.6,461.7" fill="#838893" stroke="#c9ccd2" stroke-width="1.2" vector-effect="non-scaling-stroke" stroke-linejoin="round"/>
<polygon points="411.7,457.3 415.1,457.8 414.5,460.0 411.7,459.5" fill="#838893" stroke="#c9ccd2" stroke-width="1.2" vector-effect="non-scaling-stroke" stroke-linejoin="round"/>
<polygon points="413.0,457.2 414.7,457.4 414.5,458.8 413.0,458.5" fill="#838893" stroke="#c9ccd2" stroke-width="1.2" vector-effect="non-scaling-stroke" stroke-linejoin="round"/>
<polygon points="423.4,456.3 426.1,456.7 425.6,458.5 423.4,458.1" fill="#838893" stroke="#c9ccd2" stroke-width="1.2" vector-effect="non-scaling-stroke" stroke-linejoin="round"/>
<polygon points="433.2,463.2 435.0,463.6 434.7,465.6 433.2,465.2" fill="#838893" stroke="#c9ccd2" stroke-width="1.2" vector-effect="non-scaling-stroke" stroke-linejoin="round"/>
<polygon points="432.3,461.6 434.2,461.9 433.9,463.5 432.3,463.2" fill="#838893" stroke="#c9ccd2" stroke-width="1.2" vector-effect="non-scaling-stroke" stroke-linejoin="round"/>
<polygon points="441.6,463.4 443.7,463.9 443.4,466.2 441.6,465.8" fill="#838893" stroke="#c9ccd2" stroke-width="1.2" vector-effect="non-scaling-stroke" stroke-linejoin="round"/>
<polygon points="432.7,461.1 435.9,461.5 435.4,463.6 432.7,463.2" fill="#838893" stroke="#c9ccd2" stroke-width="1.2" vector-effect="non-scaling-stroke" stroke-linejoin="round"/>
<polygon points="408.2,445.0 410.2,445.3 409.8,446.9 408.2,446.5" fill="#838893" stroke="#c9ccd2" stroke-width="1.2" vector-effect="non-scaling-stroke" stroke-linejoin="round"/>
<polygon points="416.2,439.8 418.3,440.1 418.0,441.4 416.2,441.2" fill="#838893" stroke="#c9ccd2" stroke-width="1.2" vector-effect="non-scaling-stroke" stroke-linejoin="round"/>
<polygon points="408.1,441.5 410.1,441.9 409.7,443.9 408.1,443.5" fill="#838893" stroke="#c9ccd2" stroke-width="1.2" vector-effect="non-scaling-stroke" stroke-linejoin="round"/>
<polygon points="357.7,399.0 361.1,399.4 360.6,401.3 357.7,400.9" fill="#838893" stroke="#c9ccd2" stroke-width="1.2" vector-effect="non-scaling-stroke" stroke-linejoin="round"/>
<polygon points="362.6,406.7 364.4,407.0 364.1,408.5 362.6,408.2" fill="#838893" stroke="#c9ccd2" stroke-width="1.2" vector-effect="non-scaling-stroke" stroke-linejoin="round"/>
<polygon points="369.2,405.8 371.2,406.1 370.8,407.6 369.2,407.3" fill="#838893" stroke="#c9ccd2" stroke-width="1.2" vector-effect="non-scaling-stroke" stroke-linejoin="round"/>
<polygon points="365.8,407.5 367.7,408.0 367.4,410.4 365.8,409.9" fill="#838893" stroke="#c9ccd2" stroke-width="1.2" vector-effect="non-scaling-stroke" stroke-linejoin="round"/>
<polygon points="368.5,402.0 370.8,402.3 370.4,403.7 368.5,403.4" fill="#838893" stroke="#c9ccd2" stroke-width="1.2" vector-effect="non-scaling-stroke" stroke-linejoin="round"/>
<polygon points="351.8,408.0 353.8,408.5 353.4,410.6 351.8,410.2" fill="#838893" stroke="#c9ccd2" stroke-width="1.2" vector-effect="non-scaling-stroke" stroke-linejoin="round"/>
<polygon points="170.3,239.0 172.9,239.4 172.5,241.0 170.3,240.7" fill="#838893" stroke="#c9ccd2" stroke-width="1.2" vector-effect="non-scaling-stroke" stroke-linejoin="round"/>
<polygon points="169.6,235.6 171.3,235.9 171.0,237.4 169.6,237.1" fill="#838893" stroke="#c9ccd2" stroke-width="1.2" vector-effect="non-scaling-stroke" stroke-linejoin="round"/>
<polygon points="174.5,240.0 177.2,240.3 176.7,241.9 174.5,241.6" fill="#838893" stroke="#c9ccd2" stroke-width="1.2" vector-effect="non-scaling-stroke" stroke-linejoin="round"/>
<polygon points="180.1,218.0 181.6,218.3 181.4,219.9 180.1,219.6" fill="#838893" stroke="#c9ccd2" stroke-width="1.2" vector-effect="non-scaling-stroke" stroke-linejoin="round"/>
<polygon points="173.3,213.0 175.2,213.4 174.9,215.1 173.3,214.7" fill="#838893" stroke="#c9ccd2" stroke-width="1.2" vector-effect="non-scaling-stroke" stroke-linejoin="round"/>
<polygon points="398.3,177.6 400.6,178.1 400.2,180.5 398.3,180.0" fill="#838893" stroke="#c9ccd2" stroke-width="1.2" vector-effect="non-scaling-stroke" stroke-linejoin="round"/>
<polygon points="403.3,182.1 406.2,182.5 405.7,184.4 403.3,184.0" fill="#838893" stroke="#c9ccd2" stroke-width="1.2" vector-effect="non-scaling-stroke" stroke-linejoin="round"/>
<polygon points="393.1,176.8 394.6,177.3 394.3,179.7 393.1,179.2" fill="#838893" stroke="#c9ccd2" stroke-width="1.2" vector-effect="non-scaling-stroke" stroke-linejoin="round"/>
<polygon points="394.2,212.3 395.8,212.7 395.5,214.7 394.2,214.3" fill="#838893" stroke="#c9ccd2" stroke-width="1.2" vector-effect="non-scaling-stroke" stroke-linejoin="round"/>
<polygon points="391.8,208.7 393.9,209.2 393.5,211.7 391.8,211.2" fill="#838893" stroke="#c9ccd2" stroke-width="1.2" vector-effect="non-scaling-stroke" stroke-linejoin="round"/>
<polygon points="387.3,206.2 390.2,206.7 389.7,209.1 387.3,208.6" fill="#838893" stroke="#c9ccd2" stroke-width="1.2" vector-effect="non-scaling-stroke" stroke-linejoin="round"/>
<circle cx="92.5" cy="498" r="2" fill="none" stroke="#c9ccd2" stroke-width="1" vector-effect="non-scaling-stroke"/>
<circle cx="84" cy="535" r="1.5" fill="none" stroke="#c9ccd2" stroke-width="1" vector-effect="non-scaling-stroke"/>
<circle cx="90" cy="541" r="1.5" fill="none" stroke="#c9ccd2" stroke-width="1" vector-effect="non-scaling-stroke"/>
<circle cx="96" cy="537" r="2" fill="none" stroke="#c9ccd2" stroke-width="1" vector-effect="non-scaling-stroke"/>
<circle cx="103" cy="538" r="2" fill="none" stroke="#c9ccd2" stroke-width="1" vector-effect="non-scaling-stroke"/>
<circle cx="112" cy="536" r="2" fill="none" stroke="#c9ccd2" stroke-width="1" vector-effect="non-scaling-stroke"/>
<circle cx="118" cy="532" r="1.5" fill="none" stroke="#c9ccd2" stroke-width="1" vector-effect="non-scaling-stroke"/>
<path d="M332.5,97.0 L334.3,112.4 L318.8,122.6 L318.0,151.7 L323.2,160.2 L320.6,172.2 L317.2,187.6 L312.9,199.5 M458.0,97.0 L458.0,112.4 L461.5,119.2 L470.0,134.6 L456.4,155.0 L441.0,173.0 M395.0,97.0 L401.0,119.0 M414.9,212.5 L424.2,216.0 L438.3,218.4 L443.0,210.2 L439.5,196.1 L445.0,185.6 M389.1,236.0 L404.3,234.8 L416.0,234.8 L427.8,240.6 L445.0,238.3 M438.3,218.4 L445.0,238.3 L456.4,244.1 L466.6,245.8 L466.6,261.2 L475.2,274.8 L472.6,291.9 M383.2,254.7 L398.4,257.0 L408.5,268.0 L418.8,266.3 L427.3,257.8 L427.8,240.6 M386.7,250.0 L398.4,251.2 L398.4,257.0 M406.8,268.0 L408.5,285.1 L410.3,302.2 L410.3,312.4 L400.0,322.7 M410.3,294.5 L434.2,297.0 L461.5,300.5 L464.9,291.9 L472.6,291.9 L487.1,290.2 L492.2,300.5 L500.8,310.7 L516.2,314.1 L536.7,322.7 L535.0,343.2 M335.9,268.0 L334.2,283.4 L337.6,291.9 L339.3,303.9 M318.8,315.8 L330.8,309.0 L339.3,305.6 L353.0,314.1 L370.1,322.7 L380.3,327.8 L394.0,326.1 L400.0,322.7 M318.8,315.8 L322.3,324.4 L332.5,333.0 L353.0,333.0 L366.7,326.1 L370.1,322.7 M324.0,339.7 L339.3,336.4 L356.4,336.4 L359.8,344.9 L353.0,350.0 L356.0,357.0 M366.7,326.1 L385.0,337.0 L400.0,339.7 L417.1,343.2 L434.2,338.0 L451.2,346.6 L456.4,358.0 L456.4,367.3 M434.2,338.0 L439.5,360.0 M279.5,273.1 L277.8,283.4 L271.0,295.4 L272.7,302.2 L271.0,317.5 M236.8,307.3 L255.6,310.7 L264.2,315.8 L271.0,317.5 L274.4,322.7 L286.4,327.8 L284.7,336.4 L281.3,346.6 L274.4,353.4 L271.0,357.0 M281.3,346.6 L300.0,346.6 L324.0,339.7 M271.0,357.0 L274.6,356.7 L289.4,345.6 L302.4,349.3 L322.9,345.6 L326.6,356.7 L330.3,360.4 M276.4,358.6 L289.8,363.8 L301.7,357.0 M281.3,389.5 L277.8,377.5 L279.5,360.4 M212.1,392.9 L222.3,398.0 L231.0,399.7 L248.8,391.2 M325.7,367.3 L334.7,369.4 L345.6,366.3 L358.2,366.3 L372.2,363.1 L381.6,360.0 M347.2,374.1 L372.2,375.6 L375.4,386.6 L369.1,400.7 L356.6,396.0 L347.2,381.9 L347.2,374.1 M381.6,360.0 L389.4,369.4 L398.8,378.8 L402.0,388.2 L400.4,403.8 M372.2,402.2 L384.7,405.4 L400.4,403.8 M384.7,405.4 L383.2,416.3 L387.9,419.4 L403.5,414.7 L400.4,403.8 M378.5,428.8 L387.9,419.4 M403.5,414.7 L423.9,411.6 L439.5,413.2 L436.4,419.4 L433.2,422.6 M402.0,388.2 L417.6,389.7 L442.6,386.6 M439.5,360.0 L445.7,375.6 L442.6,386.6 M356.0,357.0 L358.2,366.3 M160.8,408.3 L174.5,410.0 L171.0,422.0 L167.6,432.2 L169.3,445.8 L165.9,456.1 M509.3,374.1 L535.5,386.1 L547.3,387.3 L601.7,411.0 M578.1,419.3 L592.3,408.6 M546.9,411.7 L563.9,415.7 L578.1,418.1 L585.2,437.0 L599.4,433.4 L604.1,444.1 M563.9,415.7 L563.9,427.5 L568.6,434.6 L571.0,453.6 L578.1,463.0 M505.9,459.5 L509.5,460.7 L535.5,458.3 L556.8,455.9 L571.0,455.9 L578.1,463.0 L582.8,470.1 L580.4,482.0 L589.9,500.0 L594.9,504.1 L596.6,514.3 L601.8,521.2 M545.0,458.0 L542.6,482.0 L528.4,493.8 L514.2,500.0 L512.7,502.4 L502.5,497.0 M526.4,493.8 L531.5,504.1 L512.7,509.2 L519.6,521.2 L497.4,529.7 M531.5,504.1 L558.9,516.0 L564.0,526.3 L571.0,529.7 L577.8,528.0 L588.1,531.4 L598.3,526.3 M490.5,511.8 L495.7,529.7 M742.0,257.8 L724.7,264.6 L700.8,268.9 L707.7,275.7 L700.8,275.7 L692.3,290.2 L697.4,302.2 L695.7,306.5 L682.0,303.9 L653.0,304.8 L634.2,291.9 L622.3,291.9 L605.2,307.3 L596.6,303.9 L593.2,317.5 L588.1,329.5 L603.5,348.3 L606.9,358.0 M632.0,401.0 L646.2,399.7 L659.8,411.7 L670.1,413.4 L671.8,410.0 L683.7,399.7 L692.3,410.0 L695.7,416.8 L716.2,428.8 L733.3,442.4 L735.0,452.7 L742.0,454.4 M659.8,411.7 L659.8,374.1 L682.0,365.5 L692.3,374.1 L704.2,389.5 L742.0,392.9 M642.7,457.8 L668.4,446.7 L688.9,457.8 L700.8,461.2 L702.5,473.2 L711.1,474.9 L724.7,466.3 L735.0,452.7 M702.5,473.2 L695.7,488.0 L697.4,507.5 L706.0,514.3 L698.3,524.6 L711.1,538.2 L716.2,551.9 L706.0,557.0 L704.2,564.7 M698.3,524.6 L724.7,528.0 L740.1,524.6 L742.0,516.0 M625.7,572.0 L629.1,584.4 L653.0,587.8 L656.4,593.0 L649.6,610.0 L627.4,618.0 L637.6,635.8 M654.7,587.8 L661.5,567.3 M557.5,630.6 L571.9,629.2 L584.7,635.8 L586.4,642.6 L603.5,623.8 L627.4,618.0 M549.0,669.0 L559.0,681.0 L551.0,681.0 M571.0,699.0 L596.6,705.8 L574.4,729.7 L560.0,728.0 M418.5,507.5 L418.5,593.0 L468.3,591.2 L488.8,594.6 L500.8,584.4 M380.3,504.1 L379.5,521.2 M206.9,474.9 L210.3,488.0 L215.4,500.7 L196.7,507.5 L195.0,516.0 L177.9,524.6 L159.1,533.1 L156.5,545.1 M121.5,545.1 L156.5,545.1 L156.5,558.7 L130.0,558.7 L130.0,581.0 L122.4,584.4 L122.4,598.9 L91.6,598.9 M156.5,548.5 L184.7,567.3 L245.7,608.3 L249.4,615.7 L256.9,615.7 L316.3,578.6 M173.3,566.7 L182.6,645.4 L149.2,645.4 L132.4,647.3 L128.7,652.9 L134.3,669.6 M95.3,669.6 L115.7,671.4 L134.3,669.6 L151.0,671.4 L162.2,686.3 M121.3,690.0 L138.0,688.2 L139.9,703.0 L149.2,704.9 L152.9,708.6 L162.2,697.4 L160.3,686.3 M289.8,459.5 L288.1,473.2 L283.0,488.0 L294.9,504.1 L300.0,521.2 L300.9,555.3 L305.2,570.7 L316.3,578.6 L334.9,586.0 L347.9,580.4 L409.2,612.0 M313.7,495.5 L313.7,502.4 L301.7,510.9 M347.9,580.4 L347.9,608.3 L346.0,630.6 L331.2,650.9 L331.2,660.3 M95.3,638.0 L108.3,636.2 L128.7,652.9 M93.4,660.3 L115.7,662.2 M95.3,665.9 L115.7,667.7 M162.2,686.3 L182.6,684.4 L190.0,665.9 L208.6,654.7 L223.4,649.2 L249.4,645.4 L256.9,615.7 M182.6,684.4 L191.9,690.0 L203.0,680.7 L223.4,680.7 L234.6,686.3 M256.9,615.7 L255.0,639.9 L225.3,649.2 L230.9,660.3 L245.7,671.4 L251.3,675.2 L253.2,660.3 M201.2,680.7 L203.0,701.2 L199.3,712.3 L201.2,725.3 M162.2,697.4 L160.3,712.3 L165.9,730.9 M223.4,680.7 L229.0,693.7 L230.9,717.9 M234.6,682.6 L236.4,716.0 M245.7,677.0 L247.6,682.6 L243.9,716.0 M253.2,660.3 L271.7,658.4 L297.7,665.9 L320.0,662.2 L331.2,660.3 M331.2,660.3 L338.6,675.2 L327.5,690.0 L312.6,712.3 L305.2,716.0 L292.2,730.9 M338.6,675.2 L346.0,688.0 L334.9,693.7 L344.2,708.6 M344.2,708.6 L372.0,703.0 L394.3,690.0 L407.3,682.6 M344.2,708.6 L336.7,719.7 L349.7,745.7 L372.0,738.3 L400.0,729.7 M411.0,612.0 L411.0,643.6 L403.6,647.3 L396.2,667.7 L407.3,682.6 L407.3,697.4 L431.8,719.7 M400.0,729.7 L425.6,726.3 L439.3,731.5 L464.9,738.3 L487.1,738.3 L502.5,731.5 L529.8,736.6 L546.9,733.2 L571.0,728.0 M523.0,627.0 L511.0,635.8 L507.6,658.0 L497.4,680.2 L490.5,695.6 L482.0,704.1 L502.5,728.0 L488.8,733.2 M507.6,658.0 L519.6,654.6 L536.7,658.0 L553.7,670.0" fill="none" stroke="#c9ccd2" stroke-width="1.0" vector-effect="non-scaling-stroke" stroke-linejoin="round"/>
<path d="M313.7,97.0 L308.6,107.2 L301.7,119.2 L288.0,122.6 L279.5,131.2 L271.0,141.4 L264.2,147.4 L263.3,158.5 L263.3,174.0 L265.9,189.3 L267.6,201.2 L270.0,205.0 L278.2,210.5 L286.4,209.2 L297.4,201.0 L302.8,195.5 L307.0,183.0 M364.4,194.1 L368.5,190.0 L371.9,184.2 L366.8,175.6 L358.2,168.8 L358.2,153.4 L363.3,134.6 L373.6,126.0 L383.8,119.2 L391.4,107.2 L390.6,97.0 M416.2,97.0 L410.3,107.2 L401.7,119.2 L390.6,129.5 L389.0,148.3 L390.6,170.5 L392.4,179.0 L401.0,182.0 L417.0,180.7 L440.1,173.0 L446.0,175.6 L458.0,181.0 L447.8,184.2 L445.0,185.6 L433.6,187.9 L421.9,187.9 L407.8,192.6 L398.4,197.3 L394.9,205.5 L396.1,212.5 L400.8,210.2 L404.3,206.7 L413.7,207.8 L414.9,212.5 L413.7,224.2 L409.0,227.8 L404.3,223.1 L399.6,216.0 M305.6,263.9 L302.0,262.0 L300.0,255.0 L301.5,245.0 L303.0,236.0 L304.0,228.0 L307.0,216.0 L300.1,220.1 L290.5,225.6 L287.8,231.1 L289.2,244.7 L287.8,255.7 L290.5,266.6 L293.2,268.0 M231.0,322.7 L222.3,326.1 L210.3,322.7 L200.1,331.2 L186.4,336.4 L189.8,344.9 L205.2,350.0 L208.6,358.0 M162.5,390.3 L152.3,396.3 L154.8,404.8 L156.5,415.1 L154.8,428.8 M318.8,370.7 L325.7,367.3 L335.9,377.5 L349.6,391.2 L365.0,399.0 L377.0,404.0 L376.3,427.1 L380.4,433.4 L384.6,441.7 L383.6,445.9 L387.7,450.0 L394.0,460.5 L399.2,462.6 L403.4,460.5 L404.4,454.2 L401.3,449.0 L405.5,448.0 L410.7,452.1 L414.8,451.1 L407.5,443.8 L403.4,436.5 L404.4,430.2 L401.3,424.0 L409.6,419.8 L415.9,419.8 L422.1,420.9 L431.5,424.0 L434.7,421.9 L428.4,428.2 L428.4,435.5 L430.5,443.8 L432.6,452.1 L437.8,458.4 L448.2,462.6 L456.4,465.7 L461.8,461.5 L470.0,460.5 M188.1,257.8 L186.4,250.9 L181.1,248.4 L176.2,245.8 L177.1,240.6 L174.2,233.8 L181.1,224.0 L179.1,214.2 L183.0,207.4 L186.0,202.5 M186.0,202.5 L194.7,203.5 L200.6,201.5 L203.5,193.7 L199.6,204.4 L192.8,217.1 L198.7,216.2 L209.4,217.1 M172.8,290.2 L159.1,295.4 L148.8,299.6 L143.7,295.4 L142.0,290.2 L148.8,283.4 L147.1,278.2 L145.4,271.4 L147.1,264.6 L155.7,261.2 L157.4,257.8 L157.4,250.9 M312.0,238.5 L319.0,237.0 L325.0,241.0 L325.5,250.0 L320.0,253.0 L313.0,252.0 L310.0,246.0 L312.0,238.5 M378.0,175.0 L390.0,172.0 L400.0,177.0 L404.0,183.0 L392.0,184.0 L380.0,181.0 L378.0,175.0 M301.5,246.0 L306.0,244.5 L309.0,249.0 L307.0,254.0 L302.0,253.5 L301.5,246.0 M309.0,256.0 L318.0,254.5 L321.0,257.5 L311.0,259.0 L309.0,256.0 M334.3,247.5 L335.7,242.0 L346.6,237.9" fill="none" stroke="#c9ccd2" stroke-width="3.4" stroke-dasharray="1.6,1.1,1,0.8,2.2,1.3" stroke-opacity="0.8" filter="url(#jag)" vector-effect="non-scaling-stroke"/>
</g></defs>
<filter id="jag2" x="0" y="0" width="100%" height="100%"><feTurbulence type="turbulence" baseFrequency="0.7" numOctaves="1" seed="7"/><feDisplacementMap in="SourceGraphic" scale="2.2" xChannelSelector="R" yChannelSelector="G"/></filter><clipPath id="eu"><polygon points="0,0 742,0 742,290 590,290 590,482 400,482 400,462 300,462 300,455 200,455 200,470 0,470"/></clipPath><clipPath id="noeu"><path d="M0,0 H800 V800 H0Z M0,0 742,0 742,290 590,290 590,482 400,482 400,462 300,462 300,455 200,455 200,470 0,470Z" clip-rule="evenodd"/></clipPath><use href="#geo2" clip-path="url(#noeu)"/><g clip-path="url(#eu)"><use href="#geo" filter="url(#jag2)"/></g>
<rect x="68" y="97" width="1" height="651" fill="#d2d6de"/><rect x="146" y="97" width="1" height="651" fill="#d2d6de"/><rect x="224" y="97" width="1" height="651" fill="#d2d6de"/><rect x="301" y="97" width="1" height="651" fill="#d2d6de"/><rect x="379" y="97" width="1" height="651" fill="#d2d6de"/><rect x="457" y="97" width="1" height="651" fill="#d2d6de"/><rect x="535" y="97" width="1" height="651" fill="#d2d6de"/><rect x="613" y="97" width="1" height="651" fill="#d2d6de"/><rect x="691" y="97" width="1" height="651" fill="#d2d6de"/><rect x="60" y="181" width="682" height="1" fill="#d2d6de"/><rect x="60" y="318" width="682" height="1" fill="#d2d6de"/><rect x="60" y="428" width="682" height="1" fill="#d2d6de"/><rect x="60" y="523" width="682" height="1" fill="#d2d6de"/><rect x="60" y="608" width="682" height="1" fill="#d2d6de"/><rect x="60" y="689" width="682" height="1" fill="#d2d6de"/>
<g fill="#c3cad6" font-family="Liberation Sans" font-size="9.5" letter-spacing="0.1"><text x="68.5" y="738" text-anchor="middle">020W</text><text x="146.5" y="738" text-anchor="middle">010W</text><text x="224.5" y="738" text-anchor="middle">000E</text><text x="301.5" y="738" text-anchor="middle">010E</text><text x="379.5" y="738" text-anchor="middle">020E</text><text x="457.5" y="738" text-anchor="middle">030E</text><text x="535.5" y="738" text-anchor="middle">040E</text><text x="613.5" y="738" text-anchor="middle">050E</text><text x="691.5" y="738" text-anchor="middle">060E</text><text x="69" y="180">60N</text><text x="69" y="317">50N</text><text x="69" y="427">40N</text><text x="69" y="522">30N</text><text x="69" y="607">20N</text><text x="69" y="688">10N</text></g>
</svg>
<div class="a" style="left:60px;top:748px;width:683px;height:1px;background:#fff"></div>
<div class="a" style="left:743px;top:97px;width:279px;height:260px;border-top:1px solid #fff;border-left:1px solid #fff;border-right:1px solid #404040;border-bottom:1px solid #404040;box-shadow:inset -1px -1px 0 #808080"></div>
<div class="a" style="left:748px;top:103px;width:269px;height:28px;border-top:1px solid #808080;border-left:1px solid #808080;border-right:1px solid #fff;border-bottom:1px solid #fff"></div>
<div class="sb" style="left:749px;top:104px"><svg width="23" height="24" viewBox="0 -0.5 23 23"><path d="M7,3 L7,17 L10,14 L13,20 L15,19 L12,13 L16,13Z" fill="#fff" stroke="#000" stroke-width="1"/></svg></div>
<div class="sb" style="left:774px;top:104px"><svg width="23" height="24" viewBox="0 -0.5 23 23"><path d="M6,12 L4,10 L3,11 L7,17 L9,20 L16,20 L18,15 L18,8 L16,8 L16,12 L15,5 L13,5 L13,11 L12,3 L10,3 L10,11 L9,5 L7,5 L7,13Z" fill="#fff" stroke="#000" stroke-width="1.2" stroke-linejoin="round"/></svg></div>
<div class="sb p" style="left:799px;top:104px"><svg width="23" height="24" viewBox="0 0 23 24"><circle cx="9" cy="11.5" r="2.3" fill="none" stroke="#000" stroke-width="1.5"/><circle cx="14.5" cy="11.5" r="2.3" fill="none" stroke="#000" stroke-width="1.5"/><path d="M6.5,14 h10.5" stroke="#000" stroke-width="1"/></svg></div>
<div class="sb" style="left:824px;top:104px"><svg width="23" height="24" viewBox="0 -0.5 23 23"><rect x="4" y="5" width="15" height="13" fill="#00ffff"/><path d="M4,8 V5 H7 M16,5 H19 V8 M19,15 V18 H16 M7,18 H4 V15" fill="none" stroke="#000" stroke-width="1.2"/><text x="11.5" y="16" text-anchor="middle" font-family="Liberation Sans" font-size="12" font-weight="normal" fill="#000">I</text></svg></div>
<div class="sb" style="left:849px;top:104px"><svg width="23" height="24" viewBox="0 -0.5 23 23"><rect x="4" y="5" width="15" height="13" fill="#00ffff"/><path d="M4,8 V5 H7 M16,5 H19 V8 M19,15 V18 H16 M7,18 H4 V15" fill="none" stroke="#000" stroke-width="1.2"/><text x="11.5" y="16" text-anchor="middle" font-family="Liberation Sans" font-size="12" font-weight="normal" fill="#000">D</text></svg></div>
<div class="sb" style="left:874px;top:104px"><svg width="23" height="24" viewBox="0 -0.5 23 23"><rect x="4" y="4" width="15" height="15" fill="#fff" stroke="#000" stroke-width="1.4"/><path d="M6,6 L9,9 M6,6 h3 M6,6 v3 M17,6 L14,9 M17,6 h-3 M17,6 v3 M6,17 L9,14 M6,17 h3 M6,17 v-3 M17,17 L14,14 M17,17 h-3 M17,17 v-3" stroke="#000" fill="none"/></svg></div>
<svg class="a" style="left:748px;top:132px" width="270" height="220" viewBox="748 132 270 220">
<use href="#geo2" transform="translate(738.3,81.7) scale(0.516,0.5157)"/>
<rect x="773" y="132" width="1" height="220" fill="#d2d6de"/><rect x="813" y="132" width="1" height="220" fill="#d2d6de"/><rect x="854" y="132" width="1" height="220" fill="#d2d6de"/><rect x="894" y="132" width="1" height="220" fill="#d2d6de"/><rect x="934" y="132" width="1" height="220" fill="#d2d6de"/><rect x="974" y="132" width="1" height="220" fill="#d2d6de"/><rect x="1014" y="132" width="1" height="220" fill="#d2d6de"/><rect x="748" y="175" width="270" height="1" fill="#d2d6de"/><rect x="748" y="246" width="270" height="1" fill="#d2d6de"/><rect x="748" y="302" width="270" height="1" fill="#d2d6de"/>
<g fill="#c3cad6" font-family="Liberation Sans" font-size="9.5" letter-spacing="0.1"><text x="773" y="344" text-anchor="middle">020W</text><text x="813" y="344" text-anchor="middle">010W</text><text x="854" y="344" text-anchor="middle">000E</text><text x="894" y="344" text-anchor="middle">010E</text><text x="934" y="344" text-anchor="middle">020E</text><text x="974" y="344" text-anchor="middle">030E</text><text x="1014" y="344" text-anchor="middle">040E</text><text x="750" y="174">60</text><text x="750" y="245">50</text><text x="750" y="301">40</text></g>
<rect x="767.5" y="131.5" width="231" height="221" fill="none" stroke="#ffc800" stroke-width="7"/>
<rect x="770.5" y="135.5" width="224" height="213" fill="none" stroke="#c09828" stroke-width="1.6"/>
</svg>
<div class="a" style="left:743px;top:381px;width:279px;height:366px;border-top:1px solid #fff;border-left:1px solid #fff;border-right:1px solid #404040;border-bottom:1px solid #404040;box-shadow:inset -1px -1px 0 #808080"></div>
<div class="a" style="left:743px;top:359px;width:49px;height:23px;background:#d4d0c8;border-top:1px solid #fff;border-left:1px solid #fff;border-right:1px solid #404040;box-shadow:inset -1px 0 0 #808080;border-radius:2px 2px 0 0"></div>
<div class="a t" style="left:750px;top:364px;letter-spacing:0.3px">Layers</div>
<div class="a" style="left:793px;top:362px;width:34px;height:19px;background:#d4d0c8;border-top:1px solid #fff;border-left:1px solid #fff;border-right:1px solid #404040;box-shadow:inset -1px 0 0 #808080;border-radius:2px 2px 0 0"></div>
<div class="a t" style="left:799px;top:366px;letter-spacing:0.3px">Find</div>
<div class="a" style="left:827px;top:362px;width:62px;height:19px;background:#d4d0c8;border-top:1px solid #fff;border-left:1px solid #fff;border-right:1px solid #404040;box-shadow:inset -1px 0 0 #808080;border-radius:2px 2px 0 0"></div>
<div class="a t" style="left:833px;top:366px;letter-spacing:0.3px">Selection</div>
<svg class="a" style="left:752px;top:384px" width="100" height="16" viewBox="0 0 100 16"><circle cx="6" cy="8" r="2.5" fill="none" stroke="#000" stroke-width="1.6"/><circle cx="12" cy="8" r="2.5" fill="none" stroke="#000" stroke-width="1.6"/><path d="M3,10.5 h12" stroke="#000" stroke-width="1"/><path d="M42,10 L50,2 L53,5 L45,13Z" fill="#fff" stroke="#000" stroke-width="1"/><circle cx="45" cy="10" r="1.8" fill="#e02020"/><path d="M38,13 L42,10 M39,15 L44,12" stroke="#000"/><rect x="76" y="2" width="3" height="3" fill="#000080"/><rect x="76" y="7" width="3" height="3" fill="#000080"/><rect x="76" y="12" width="3" height="3" fill="#000080"/><path d="M81,3.5 h8 M81,8.5 h8 M81,13.5 h8" stroke="#000" stroke-width="1.4"/></svg>
<div class="ab" style="left:941px"><svg width="18" height="16"><path d="M4,13 L9.5,4 L15,13Z" fill="#808080"/></svg></div>
<div class="ab" style="left:961px"><svg width="18" height="16"><path d="M4,4 L9.5,13 L15,4Z" fill="#808080"/></svg></div>
<div class="ab" style="left:981px"><svg width="18" height="16"><path d="M4,2.5 h11" stroke="#808080" stroke-width="1.2"/><path d="M4,13 L9.5,4 L15,13Z" fill="#808080"/></svg></div>
<div class="ab" style="left:1001px"><svg width="18" height="16"><path d="M4,14.5 h11" stroke="#808080" stroke-width="1.2"/><path d="M4,3 L9.5,12 L15,3Z" fill="#808080"/></svg></div>
<div class="a" style="left:745px;top:403px;width:276px;height:342px;background:#fff;border-top:1px solid #808080;border-left:1px solid #808080;border-right:1px solid #fff;border-bottom:1px solid #fff;box-shadow:inset 1px 1px 0 #404040,inset -1px -1px 0 #d4d0c8"></div>
<div class="a" style="left:759px;top:423px;width:12px;height:12px;border:1px solid #808080;border-right-color:#d4d0c8;border-bottom-color:#d4d0c8;box-shadow:inset 1px 1px 0 #c0c0c0;background:#fff"><svg class="a" style="left:-1px;top:-1px" width="12" height="12"><path d="M2.5,5.5 L4.5,7.5 L9,3" fill="none" stroke="#000" stroke-width="1.8"/></svg></div>
<div class="a" style="left:795px;top:423px;width:12px;height:12px;border:1px solid #808080;border-right-color:#d4d0c8;border-bottom-color:#d4d0c8;box-shadow:inset 1px 1px 0 #c0c0c0;background:#fff"><svg class="a" style="left:-1px;top:-1px" width="12" height="12"><path d="M2.5,5.5 L4.5,7.5 L9,3" fill="none" stroke="#000" stroke-width="1.8"/></svg></div>
<div class="a" style="left:759px;top:439px;width:12px;height:12px;border:1px solid #808080;border-right-color:#d4d0c8;border-bottom-color:#d4d0c8;box-shadow:inset 1px 1px 0 #c0c0c0;background:#fff"><svg class="a" style="left:-1px;top:-1px" width="12" height="12"><path d="M2.5,5.5 L4.5,7.5 L9,3" fill="none" stroke="#000" stroke-width="1.8"/></svg></div>
<div class="a" style="left:795px;top:439px;width:12px;height:12px;border:1px solid #808080;border-right-color:#d4d0c8;border-bottom-color:#d4d0c8;box-shadow:inset 1px 1px 0 #c0c0c0;background:#fff"><svg class="a" style="left:-1px;top:-1px" width="12" height="12"></svg></div>
<svg class="a" style="left:856px;top:405px" width="16" height="16"><circle cx="8" cy="8" r="7" fill="#1830c0" stroke="#0a1a80" stroke-width="0.8"/><path d="M3,5 L7,2 L10,4 L8,7 L5,8Z M9,9 L13,9 L12,13 L9,12Z" fill="#30c040"/></svg>
<div class="a t" style="left:875px;top:407px;font-weight:bold">Map</div>
<svg class="a" style="left:860px;top:420px" width="16" height="30"><path d="M3.5,0 V25.5 H15 M3.5,9.5 H15" fill="none" stroke="#808080" stroke-dasharray="1,1"/></svg>
<div class="a t" style="left:876px;top:423px">Grid</div>
<div class="a t" style="left:876px;top:439px">Countries</div>
<div class="a" style="left:0;top:750px;width:1021px;height:1px;background:#fff"></div>
<div class="a" style="left:2px;top:751px;width:771px;height:15px;border-top:1px solid #808080;border-left:1px solid #808080;border-right:1px solid #fff;border-bottom:1px solid #fff"></div>
<div class="a" style="left:779px;top:751px;width:199px;height:15px;border-top:1px solid #808080;border-left:1px solid #808080;border-right:1px solid #fff;border-bottom:1px solid #fff"></div>
<div class="a t" style="left:779px;top:752px;width:199px;text-align:center">50° 04' 17" N / 020° 44' 26" W</div>
<div class="a" style="left:980px;top:751px;width:42px;height:15px;border-top:1px solid #fff;border-left:1px solid #fff;border-right:1px solid #404040;border-bottom:1px solid #404040"></div>
<div class="a" style="left:0;top:766px;width:1023px;height:1px;background:#808080"></div>
</body></html>
